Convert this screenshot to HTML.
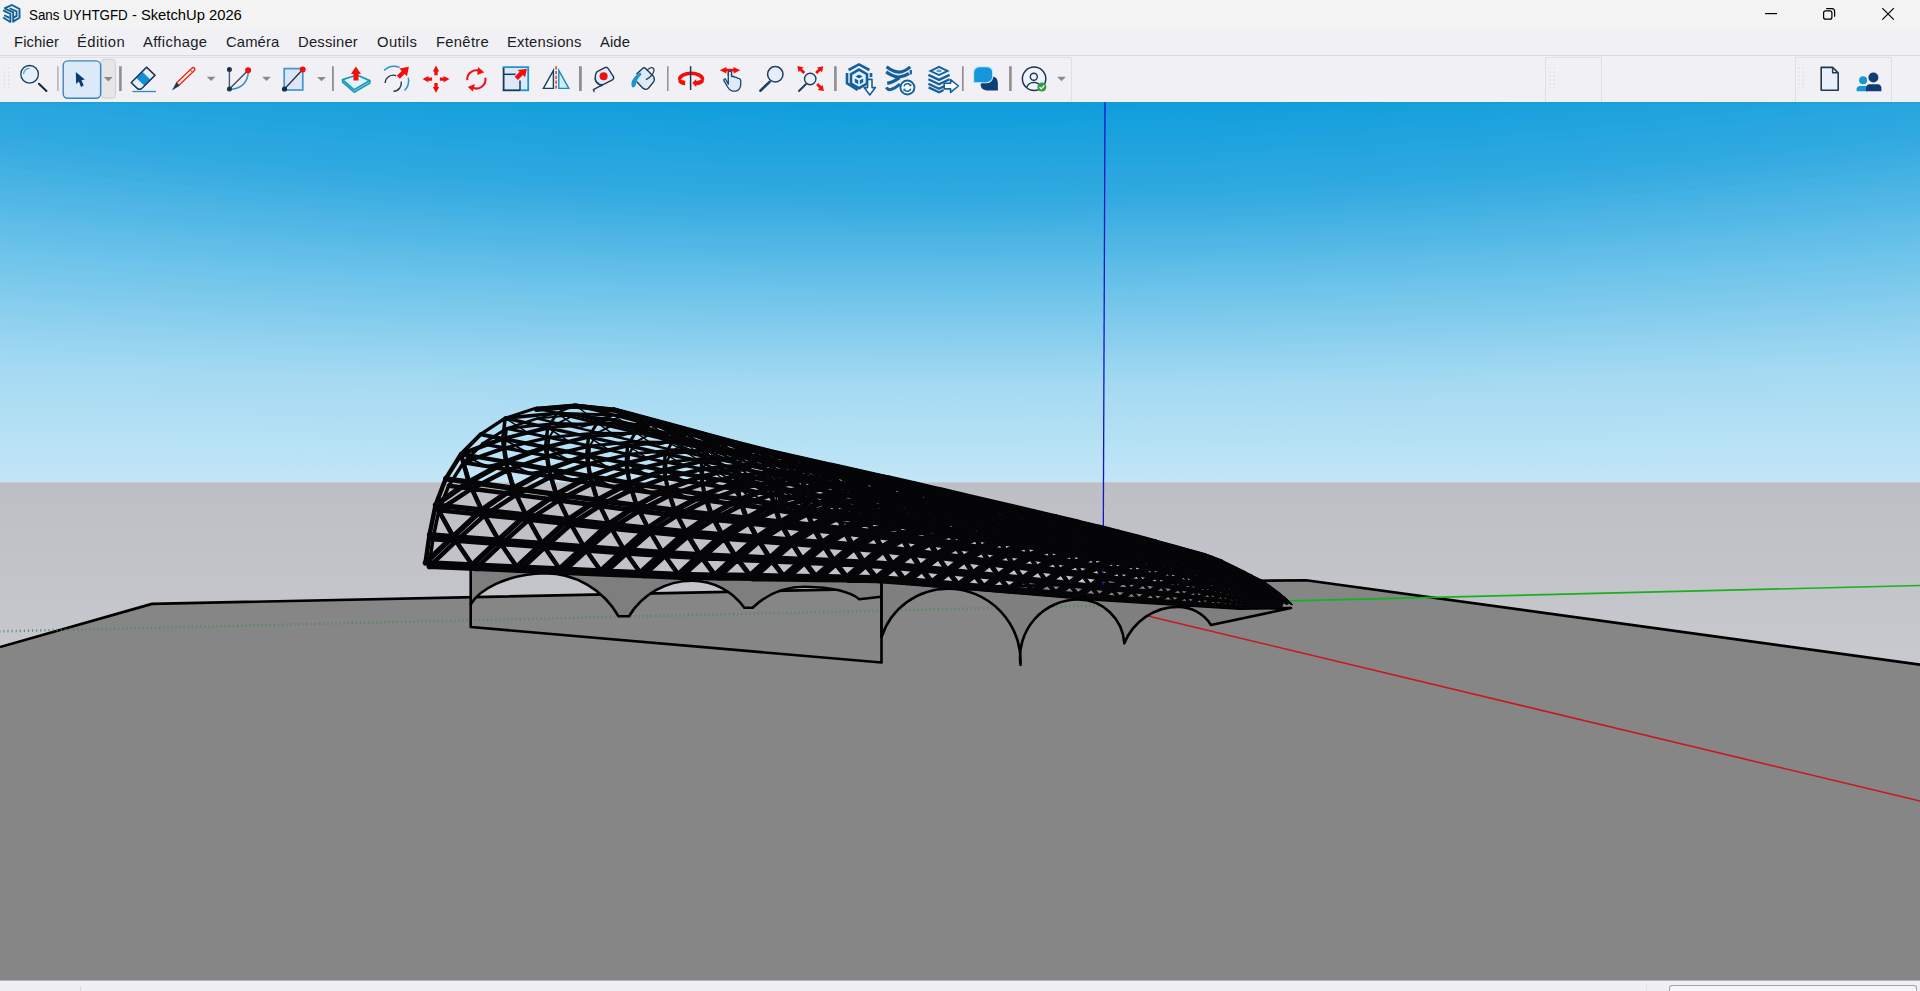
<!DOCTYPE html>
<html><head><meta charset="utf-8"><title>SketchUp</title>
<style>
html,body{margin:0;padding:0;width:1920px;height:991px;overflow:hidden;background:#f1f0f5;font-family:"Liberation Sans",sans-serif;}
#titlebar{position:absolute;left:0;top:0;width:1920px;height:28px;background:#f3f3f3;}
#title{position:absolute;left:29px;top:6px;font-size:14.8px;line-height:18px;color:#000;white-space:nowrap;}
#t1{position:absolute;left:0;top:0;display:inline-block;transform:scaleX(.903);transform-origin:0 50%;}
#t2{position:absolute;left:98.8px;top:0;white-space:pre;letter-spacing:-0.02px;}
#menubar{position:absolute;left:0;top:28px;width:1920px;height:27px;background:#f1f0f4;}
#menubar span{position:absolute;top:5px;font-size:14.8px;line-height:18px;color:#1b1b25;white-space:nowrap;}
#sep{position:absolute;left:0;top:55px;width:1920px;height:1px;background:#dadade;}
#toolbar{position:absolute;left:0;top:56px;width:1920px;height:46px;background:#f1f0f5;}
#view{position:absolute;left:0;top:102px;width:1920px;height:878.5px;}
#status{position:absolute;left:0;top:980px;width:1920px;height:11px;z-index:2;background:#f0f0f4;}
</style></head><body>
<div id="titlebar"><svg width="30" height="28" viewBox="0 0 30 28" style="position:absolute;left:0;top:0">
<g fill="none" stroke-linejoin="miter">
<g stroke="#d6f2fd" stroke-width="3.6" opacity=".9"><path d="M4.6,8.4L11.9,5L19.6,9V17.8L13.4,21.4"/><path d="M4.4,8.6L13.2,12.6V22.2"/><path d="M3.2,10.6L10.4,14.1V22.2L3.4,17.6"/></g>
<g stroke="#175e8e" stroke-width="1.8">
<path d="M4.4,8.4L11.9,5L19.5,9V17.8L13.4,21.4"/>
<path d="M4.6,8.4L13.2,12.4V22.4"/>
<path d="M9.6,8.2L16.6,11.4V15.9L13.6,17.6"/>
<path d="M3.1,10.4L10.4,14V22.4"/>
<path d="M4.2,15.2L9.6,17.9"/>
<path d="M3.1,17.4L10.4,21.9"/>
</g></g></svg><svg width="170" height="28" viewBox="1750 0 170 28" style="position:absolute;left:1750px;top:0">
<g fill="none" stroke="#000" stroke-width="1.2">
<path d="M1765.1,13.6H1777"/>
<rect x="1823.6" y="10.9" width="8.3" height="8.3" rx="2"/>
<path d="M1826.2,8.6H1832Q1834.5,8.8 1834.6,11.2V16.8"/>
<path d="M1882.3,8.2L1893.8,19.7M1893.8,8.2L1882.3,19.7"/>
</g></svg><div id="title"><span id="t1">Sans UYHTGFD</span><span id="t2"> - SketchUp 2026</span></div></div>
<div id="menubar">
<span style="left:14px;letter-spacing:0.09px">Fichier</span><span style="left:77px;letter-spacing:0.40px">Édition</span><span style="left:143px;letter-spacing:0.33px">Affichage</span><span style="left:226px;letter-spacing:0.11px">Caméra</span><span style="left:298px;letter-spacing:0.20px">Dessiner</span><span style="left:377px;letter-spacing:0.41px">Outils</span><span style="left:436px;letter-spacing:0.29px">Fenêtre</span><span style="left:507px;letter-spacing:0.23px">Extensions</span><span style="left:600px;letter-spacing:0.10px">Aide</span>
</div>
<div id="sep"></div>
<div id="toolbar"><svg width="1920" height="46" viewBox="0 56 1920 46" style="position:absolute;left:0;top:0">
<defs>
<path id="dd" d="M-4.4,-2.1h8.8l-4.4,4.4z" fill="#8b8b8d"/>
</defs>
<!-- toolbar frames -->
<g fill="none" stroke="#dfdfe5" stroke-width="1">
<path d="M0,57.5H1071.5V102"/>
<path d="M1545.5,102V57.5H1601.5V102"/>
<path d="M1795.5,102V57.5H1891.5V102"/>
</g>
<!-- grips -->
<g fill="#d6d6dc">
<g id="grip"><circle cx="4.5" cy="68.2" r=".7"/><circle cx="8.6" cy="68.2" r=".7"/><circle cx="4.5" cy="72.1" r=".7"/><circle cx="8.6" cy="72.1" r=".7"/><circle cx="4.5" cy="76" r=".7"/><circle cx="8.6" cy="76" r=".7"/><circle cx="4.5" cy="79.9" r=".7"/><circle cx="8.6" cy="79.9" r=".7"/><circle cx="4.5" cy="83.8" r=".7"/><circle cx="8.6" cy="83.8" r=".7"/><circle cx="4.5" cy="87.7" r=".7"/><circle cx="8.6" cy="87.7" r=".7"/></g>
<use href="#grip" x="1545.5"/><use href="#grip" x="1794.8"/>
</g>
<!-- separators -->
<g stroke="#8f8f92" fill="none">
<path d="M57.9,66.2V91" stroke-width="1.2" stroke="#a2a2a6"/>
<path d="M120.4,66.2V91" stroke-width="2.6"/>
<path d="M332.9,66.2V91" stroke-width="1.8"/>
<path d="M580.4,66.2V91" stroke-width="2.8"/>
<path d="M667.8,66.2V91" stroke-width="1.5"/>
<path d="M835.4,66.2V91" stroke-width="2.6"/>
<path d="M962.8,66.2V91" stroke-width="1.7"/>
<path d="M1010.4,66.2V91" stroke-width="2.6"/>
</g>
<!-- dropdown arrows -->
<use href="#dd" x="108.3" y="79.2"/><use href="#dd" x="211.1" y="78.8"/><use href="#dd" x="266.5" y="78.8"/><use href="#dd" x="321.5" y="79"/><use href="#dd" x="1061.5" y="78.9"/>
<!-- search -->
<g>
<circle cx="29.6" cy="74.3" r="8.8" fill="#e6f0fb" stroke="#1d3a57" stroke-width="1.3"/>
<path d="M23.6,73.6A6.3,6.3 0 0 1 29,68.4" fill="none" stroke="#4aa0d6" stroke-width="1.2" stroke-linecap="round"/>
<path d="M38.9,83.8L46.4,91" stroke="#15293d" stroke-width="2.1" stroke-linecap="round"/>
</g>
<!-- select button -->
<rect x="101.4" y="59.3" width="14" height="38.8" rx="3" fill="#e6e5e7" stroke="#cfced3" stroke-width="1"/>
<use href="#dd" x="108.3" y="79.2"/>
<rect x="63.2" y="60.9" width="37.4" height="37.4" rx="4.5" fill="#dce9f8" stroke="#3d84ba" stroke-width="1.4"/>
<path d="M75.8,71.9L76.1,83.9L78.9,81.5L81,86.9L83.7,85.6L81.5,80.3L84.8,79.6Z" fill="#0c3c6e"/>
<!-- eraser -->
<g>
<path d="M146.6,67.2L155,75.3L141.6,88.6Q139.5,90.3 137.4,88.4L131.2,82.6Z" fill="#e8f1fb" stroke="#1f3d5c" stroke-width="1.3" stroke-linejoin="round"/>
<path d="M142.2,71.6L150.5,79.7L144.4,85.8L136,77.8Z" fill="#1291d8"/>
<path d="M146.6,67.2L155,75.3L141.6,88.6Q139.5,90.3 137.4,88.4L131.2,82.6Z" fill="none" stroke="#1f3d5c" stroke-width="1.3" stroke-linejoin="round"/>
<path d="M132.4,91.5H156" stroke="#2b8cba" stroke-width="1.3"/>
</g>
<!-- pencil -->
<g>
<path d="M176.5,82.9L192.2,67.9Q193.4,67 194.4,68.1Q195.5,69.2 194.6,70.4L178.9,85.4Z" fill="#fde6c8" stroke="#dc141c" stroke-width="1.3" stroke-linejoin="round"/>
<path d="M190.2,69.8L192.8,72.4" stroke="#dc141c" stroke-width="1"/>
<path d="M172,90.6L176.2,82.4L179.6,85.8Z" fill="#173a5c"/>
</g>
<!-- arc -->
<g>
<path d="M229.4,69.6V89" stroke="#4c5b6e" stroke-width="1.4"/>
<path d="M229.4,89L248.1,70.2" stroke="#3c4c60" stroke-width="1.4"/>
<path d="M229.4,89.4Q247.6,88.6 248.4,71" fill="none" stroke="#3a93c6" stroke-width="1.6"/>
<circle cx="229.4" cy="69.6" r="2.5" fill="#173450"/>
<circle cx="229.4" cy="89" r="2.5" fill="#103a4c"/>
<circle cx="248.1" cy="70.2" r="3" fill="#f40d0d"/>
</g>
<!-- rectangle -->
<g>
<rect x="284.2" y="68.6" width="18.6" height="21.4" fill="#dfe4f6" stroke="#3b9bd0" stroke-width="1.7"/>
<path d="M284.5,89L302.7,69.6" stroke="#27394e" stroke-width="1.4"/>
<circle cx="284.5" cy="89" r="2.6" fill="#0f3047"/>
<circle cx="302.7" cy="69.6" r="3" fill="#f40d0d"/>
</g>
<!-- push/pull -->
<g>
<path d="M342.6,79.6L357,75L369.8,80.6L354.2,89.8Z" fill="#dff3fc" stroke="#1a9aba" stroke-width="1.7" stroke-linejoin="round"/>
<path d="M342.6,79.6V82L354.2,92.2L369.8,83V80.6" fill="none" stroke="#1a9aba" stroke-width="1.7" stroke-linejoin="round"/>
<path d="M355.9,66.6L361,73.9H358.5V80.6H353.4V73.9H350.9Z" fill="#f40d0d"/>
</g>
<!-- offset -->
<g fill="none">
<path d="M384.1,70.4A14.6,14.6 0 0 1 399.6,67.4" stroke="#2b95ca" stroke-width="1.5"/>
<path d="M408.3,77.6A14.6,14.6 0 0 1 404.6,90.6" stroke="#2b95ca" stroke-width="1.5"/>
<path d="M385.2,83A8.1,8.1 0 0 1 396.2,75.7" stroke="#1f3650" stroke-width="1.4"/>
<path d="M401.2,81.6A8.1,8.1 0 0 1 393.5,91.3" stroke="#1f3650" stroke-width="1.4"/>
<path d="M408.9,66.8L407,76.2L404.6,73.9L399.9,78.7L396.9,75.8L401.7,71L399.4,68.6Z" fill="#f40d0d"/>
</g>
<!-- move -->
<g fill="#f40d0d">
<path d="M436,65.6L439.2,71.4H437.7V75.2H434.3V71.4H432.8Z"/>
<path d="M436,92.7L439.2,86.9H437.7V83.1H434.3V86.9H432.8Z"/>
<path d="M422.5,79.1L428.3,75.9V77.4H432.1V80.8H428.3V82.3Z"/>
<path d="M449.5,79.1L443.7,75.9V77.4H439.9V80.8H443.7V82.3Z"/>
</g>
<!-- rotate -->
<g>
<path d="M467.2,80.2A9.1,9.1 0 0 1 480.6,71.4" fill="none" stroke="#ec0f18" stroke-width="2"/>
<path d="M478,66.9L484.2,72.3L477.2,75Z" fill="#f40d0d"/>
<path d="M485.3,77.6A9.1,9.1 0 0 1 472.6,87.7" fill="none" stroke="#ec0f18" stroke-width="2"/>
<path d="M474.8,83.9L467.8,87L472.9,91.4Z" fill="#f40d0d"/>
</g>
<!-- scale -->
<g>
<rect x="503.6" y="67.1" width="24.6" height="23.2" fill="#dbe9f9"/>
<path d="M503.6,90.3V67.1" stroke="#173a5e" stroke-width="1.8"/>
<path d="M502.7,90.3H520" stroke="#173a5e" stroke-width="1.8"/>
<path d="M520,90.3H529.1" stroke="#1a96d4" stroke-width="1.8"/>
<path d="M502.7,67.1H529.1M528.2,67.1V90.3" stroke="#1a96d4" stroke-width="1.8" fill="none"/>
<path d="M503.6,74.3H515.6" stroke="#173a5e" stroke-width="1.5"/>
<path d="M520,80.4V90.3" stroke="#173a5e" stroke-width="1.5"/>
<path d="M526.9,68.8L525.1,77.2L522.9,75L517.9,80L514.6,76.7L519.6,71.7L517.6,69.9Z" fill="#f40d0d"/>
</g>
<!-- flip -->
<g>
<path d="M543.4,88.4L553.4,70.4V88.4Z" fill="#f4fafd" stroke="#174060" stroke-width="1.4" stroke-linejoin="miter"/>
<path d="M558.8,70.4L568.8,88.4H558.8Z" fill="#cdeefa" stroke="#1a8fb0" stroke-width="1.4"/>
<path d="M556.1,66.2V90" stroke="#d9595c" stroke-width="1.8" stroke-dasharray="3.2 1.6"/>
</g>
<!-- tape measure -->
<g>
<path d="M597.2,71.6L604.9,67.6Q606.9,66.7 608.2,68.6L613.4,76.6Q614.4,78.6 612.4,79.8L601.6,85.3Q597.6,84.6 595.6,80.6Q594.6,74.2 597.2,71.6Z" fill="#e0eefb" stroke="#1d3a58" stroke-width="1.4" stroke-linejoin="round"/>
<path d="M594.9,77.8Q595.2,82.2 599.2,83.6" fill="none" stroke="#1d3a58" stroke-width="1.2"/>
<circle cx="603.6" cy="76.3" r="4" fill="#f40d0d"/>
<path d="M601.8,85.2L593.4,89.6L594.1,91.6" fill="none" stroke="#1d3a58" stroke-width="1.4" stroke-linecap="round" stroke-linejoin="round"/>
<rect x="600" y="84" width="2.2" height="2.4" fill="#1d3a58" transform="rotate(-27 601 85)"/>
</g>
<!-- paint bucket -->
<g>
<path d="M636.4,74.2L642.6,68.4Q644.2,67.2 645.6,68.6L653.6,76.6Q655.2,79.2 653.8,81.6L648.4,88.2Q645.8,90.4 643.2,88.4L636.6,81.4" fill="#dfeaf8" stroke="#1d3a58" stroke-width="1.4" stroke-linejoin="round"/>
<path d="M640.4,72.4Q635.2,74.6 632.2,80.6Q630.4,85.6 632.6,87.6Q635.2,87.8 636.2,83.6Q636.8,79 641.6,74.6Z" fill="#1a95d0"/>
<path d="M647.2,70.2Q650.6,66.6 653.4,68.2Q655,70.6 652.2,74.6Q650,77.6 646.4,79.4" fill="none" stroke="#1d3a58" stroke-width="1.2" stroke-linecap="round"/>
</g>
<!-- orbit -->
<g>
<path d="M679.6,79.4A11.5,6.1 0 0 1 702.6,79.4" fill="none" stroke="#f40d0d" stroke-width="3.6"/>
<path d="M678.3,77.4Q680.6,80.2 685.2,80.7V85.3Q680.2,84.6 678.5,82.2Z" fill="#f40d0d"/>
<path d="M703.9,77.4Q701,80.4 696.2,80.9V79L692.3,82.9L696.2,86.9V85.3Q701.6,84.6 703.7,82.2Z" fill="#f40d0d"/>
<path d="M690.6,66.2V90" stroke="#173a5c" stroke-width="1.5"/>
</g>
<!-- pan -->
<g>
<path d="M728.3,84.2V72.4Q728.3,71.2 729.9,71.2Q731.5,71.2 731.5,72.4V76.6Q733.4,75.6 734.6,77.4Q736.4,76.6 737.6,78.4Q739.8,78 740.7,80V84.6Q740.4,90 735.6,91.2H732.4Q729.4,90.4 727.6,87L723.8,80.4Q723.6,78.6 725.4,78.8Z" fill="#deeaf8" stroke="#1f4668" stroke-width="1.3" stroke-linejoin="round"/>
<path d="M719.8,70.2L726.4,66.9V68.8H733.6V66.9L740.2,70.2L733.6,73.5V71.6H726.4V73.5Z" fill="#f40d0d"/>
<path d="M728.3,76V72.4Q728.3,71.2 729.9,71.2Q731.5,71.2 731.5,72.4V76.6" fill="#deeaf8" stroke="#1f4668" stroke-width="1.3"/>
</g>
<!-- zoom -->
<g>
<circle cx="775.3" cy="74.3" r="7.7" fill="#e6eefb" stroke="#1c3f62" stroke-width="1.5"/>
<path d="M769.6,81.9L760.4,90.7" stroke="#1c3f62" stroke-width="2.6" stroke-linecap="round"/>
</g>
<!-- zoom extents -->
<g>
<circle cx="810.2" cy="79" r="5.7" fill="#eaf0fb" stroke="#1c3f62" stroke-width="1.4"/>
<path d="M805.8,84.2L799,91" stroke="#1c3f62" stroke-width="2" stroke-linecap="round"/>
<g fill="#f40d0d">
<path d="M797.4,66L803.6,67.2L802,68.8L805.2,72L803.2,74L800,70.8L798.6,72.2Z"/>
<path d="M823.2,66.2L822,72.4L820.4,70.8L817.2,74L815.2,72L818.4,68.8L817,67.4Z"/>
<path d="M823.9,91.1L817.7,89.9L819.3,88.3L816.1,85.1L818.1,83.1L821.3,86.3L822.7,84.9Z"/>
</g>
</g>
<!-- 3D warehouse -->
<g fill="none" stroke="#15609c" stroke-width="2.6" stroke-linejoin="miter">
<path d="M848.6,70L859,64.4L869.4,70"/>
<path d="M847,73V83.4L857.6,90"/>
<path d="M871,73V77"/>
<path d="M859,69.6L867,74.2V83.6L859,88.2L851,83.6V74.2Z" fill="#e3f3fc"/>
<path d="M859,74.6L862.6,76.6L859,78.6L855.4,76.6Z" fill="#15609c" stroke="none"/>
<path d="M854.8,78.4L858.2,80.2V84.2L854.8,82.2Z" fill="#15609c" stroke="none"/>
<path d="M863.2,78.4L859.8,80.2V84.2L863.2,82.2Z" fill="#15609c" stroke="none"/>
<path d="M867.6,79.4H872V87.6H875.4L869.8,95L864.2,87.6H867.6Z" fill="#fff" stroke-width="1.6" stroke-linejoin="round"/>
</g>
<!-- extension warehouse -->
<g fill="none" stroke="#15609c">
<path d="M886.6,66.8Q892.4,71.6 898.8,72.2Q905,71.8 910.2,66.9" stroke-width="3.2"/>
<path d="M886.2,71.9Q892.4,76.6 898.9,77.1Q904.6,76.6 909,73.4" stroke-width="3.2"/>
<path d="M910.8,70V74.4" stroke-width="2.2"/>
<path d="M887.2,83.4Q893,82.4 899.4,77.6" stroke-width="3.2"/>
<path d="M886.4,87.4Q887.6,90 890.4,89.6Q895,88.6 900,84" stroke-width="3"/>
<circle cx="907.4" cy="87.5" r="7" fill="#fff" stroke-width="1.9"/>
<path d="M904,86.2A3.7,3.7 0 0 1 910.2,84.8" stroke-width="1.5"/>
<path d="M910.8,88.8A3.7,3.7 0 0 1 904.6,90.2" stroke-width="1.5"/>
<path d="M911.4,83.4V86.2H908.6Z" fill="#15609c" stroke="none"/>
<path d="M903.4,91.6V88.8H906.2Z" fill="#15609c" stroke="none"/>
</g>
<!-- send to layout -->
<g>
<path d="M939,65.8L949.8,70.9L939,76L928.2,70.9Z" fill="#15609c"/>
<path d="M939,67.9L945.4,70.9L939,73.9L932.6,70.9Z" fill="#e8f5fd"/>
<path d="M939,69.5L942,70.9L939,72.3L936,70.9Z" fill="#15609c"/>
<path d="M939,70.3L940.3,70.9L939,71.5L937.7,70.9Z" fill="#e8f5fd"/>
<g fill="none" stroke="#15609c" stroke-width="2.3">
<path d="M928.4,74.9L939,79.9L949.6,74.9"/>
<path d="M928.4,79.3L939,84.3L949.6,79.3"/>
<path d="M928.4,83.7L939,88.7L945,85.9"/>
<path d="M928.6,87.4L939,92.2L943.6,90"/>
</g>
<path d="M944.2,83.2H950.6V79.6L958.4,86L950.6,92.4V88.9H944.2Z" fill="#fff" stroke="#15609c" stroke-width="1.6" stroke-linejoin="round"/>
</g>
<!-- chat -->
<g>
<path d="M986,76.4H992Q997.9,76.8 997.9,83V90.5H986.6Q980.8,90 980.6,84.6Z" fill="#0f3f75"/>
<path d="M979.4,66.6H987.2Q992.7,67 992.7,72.6V76.6Q992.4,82.3 986.8,82.7H973.6V72.4Q974,67 979.4,66.6Z" fill="#1497dc" stroke="#c9ecfb" stroke-width="1.1"/>
</g>
<!-- user -->
<g>
<circle cx="1034.1" cy="78.7" r="11.7" fill="#eef3fc" stroke="#1c3350" stroke-width="1.5"/>
<circle cx="1033.8" cy="76.7" r="3.5" fill="#eef3fc" stroke="#1c3350" stroke-width="1.4"/>
<path d="M1026.6,87.6Q1028.4,82.6 1033.8,82.4Q1038.4,82.6 1040.4,86" fill="none" stroke="#1c3350" stroke-width="1.4"/>
<circle cx="1041.9" cy="87.1" r="4.5" fill="#2f9e44"/>
<path d="M1039.6,87.2L1041.3,88.9L1044.3,85.5" fill="none" stroke="#fff" stroke-width="1.3"/>
</g>
<!-- doc -->
<g>
<path d="M1821.2,67.4H1832.6L1838.2,72.8V90.3H1821.2Z" fill="#eaf0fb" stroke="#24384f" stroke-width="1.6" stroke-linejoin="round"/>
<path d="M1832.6,67.4V72.8H1838.2" fill="none" stroke="#24384f" stroke-width="1.4" stroke-linejoin="round"/>
</g>
<!-- people -->
<g>
<circle cx="1863.1" cy="80.3" r="4" fill="#1596d6"/>
<path d="M1856.6,91.2V88.6Q1857,86 1859.6,86H1867V91.2Z" fill="#1596d6"/>
<circle cx="1873.4" cy="77.5" r="5" fill="#0f3e73"/>
<path d="M1866,91.2V87.6Q1866.4,84.4 1869.6,84.3H1877.8Q1881,84.4 1881.4,87.6V91.2Z" fill="#0f3e73"/>
</g>

</svg>
</div>
<svg id="view" viewBox="0 102 1920 878">
<defs><linearGradient id="gnd" x1="0" y1="0" x2="0" y2="1"><stop offset="0" stop-color="#bebec5"/><stop offset="1" stop-color="#c9c9d0"/></linearGradient></defs>
<rect x="0" y="102" width="1920" height="380" fill="#c2e6f7"/>
<path d="M0,475.9Q960,478.1 1920,475.9V100H0Z" fill="#c0e5f7"/>
<path d="M0,469.9Q960,474.1 1920,469.9V100H0Z" fill="#bee4f6"/>
<path d="M0,463.8Q960,470.2 1920,463.8V100H0Z" fill="#bde4f6"/>
<path d="M0,457.7Q960,466.3 1920,457.7V100H0Z" fill="#bbe3f6"/>
<path d="M0,451.6Q960,462.4 1920,451.6V100H0Z" fill="#bae3f6"/>
<path d="M0,445.6Q960,458.4 1920,445.6V100H0Z" fill="#b8e2f5"/>
<path d="M0,439.5Q960,454.5 1920,439.5V100H0Z" fill="#b7e1f5"/>
<path d="M0,433.4Q960,450.6 1920,433.4V100H0Z" fill="#b5e1f5"/>
<path d="M0,427.3Q960,446.7 1920,427.3V100H0Z" fill="#b4e0f4"/>
<path d="M0,421.3Q960,442.7 1920,421.3V100H0Z" fill="#b2dff4"/>
<path d="M0,415.2Q960,438.8 1920,415.2V100H0Z" fill="#b0dff4"/>
<path d="M0,409.1Q960,434.9 1920,409.1V100H0Z" fill="#afdef4"/>
<path d="M0,403.0Q960,431.0 1920,403.0V100H0Z" fill="#adddf3"/>
<path d="M0,397.0Q960,427.0 1920,397.0V100H0Z" fill="#acddf3"/>
<path d="M0,390.9Q960,423.1 1920,390.9V100H0Z" fill="#aadcf3"/>
<path d="M0,384.8Q960,419.2 1920,384.8V100H0Z" fill="#a9dcf3"/>
<path d="M0,378.7Q960,415.3 1920,378.7V100H0Z" fill="#a7dbf2"/>
<path d="M0,372.7Q960,411.3 1920,372.7V100H0Z" fill="#a6daf2"/>
<path d="M0,366.6Q960,407.4 1920,366.6V100H0Z" fill="#a4d9f2"/>
<path d="M0,360.5Q960,403.5 1920,360.5V100H0Z" fill="#a1d8f1"/>
<path d="M0,354.5Q960,399.5 1920,354.5V100H0Z" fill="#9ed7f1"/>
<path d="M0,348.4Q960,395.6 1920,348.4V100H0Z" fill="#9bd6f1"/>
<path d="M0,342.3Q960,391.7 1920,342.3V100H0Z" fill="#98d5f0"/>
<path d="M0,336.2Q960,387.8 1920,336.2V100H0Z" fill="#95d3f0"/>
<path d="M0,330.2Q960,383.8 1920,330.2V100H0Z" fill="#92d2ef"/>
<path d="M0,324.1Q960,379.9 1920,324.1V100H0Z" fill="#8fd1ef"/>
<path d="M0,318.0Q960,376.0 1920,318.0V100H0Z" fill="#8cd0ee"/>
<path d="M0,311.9Q960,372.1 1920,311.9V100H0Z" fill="#89ceee"/>
<path d="M0,305.9Q960,368.1 1920,305.9V100H0Z" fill="#86cdee"/>
<path d="M0,299.8Q960,364.2 1920,299.8V100H0Z" fill="#83cced"/>
<path d="M0,293.7Q960,360.3 1920,293.7V100H0Z" fill="#80cbed"/>
<path d="M0,287.6Q960,356.4 1920,287.6V100H0Z" fill="#7dcaec"/>
<path d="M0,281.6Q960,352.4 1920,281.6V100H0Z" fill="#7ac8ec"/>
<path d="M0,275.5Q960,348.5 1920,275.5V100H0Z" fill="#77c7eb"/>
<path d="M0,269.4Q960,344.6 1920,269.4V100H0Z" fill="#74c6eb"/>
<path d="M0,263.3Q960,340.7 1920,263.3V100H0Z" fill="#71c5eb"/>
<path d="M0,257.3Q960,336.7 1920,257.3V100H0Z" fill="#6ec4ea"/>
<path d="M0,251.2Q960,332.8 1920,251.2V100H0Z" fill="#6bc2ea"/>
<path d="M0,245.1Q960,328.9 1920,245.1V100H0Z" fill="#68c1e9"/>
<path d="M0,239.0Q960,325.0 1920,239.0V100H0Z" fill="#65c0e9"/>
<path d="M0,233.0Q960,321.0 1920,233.0V100H0Z" fill="#62bee8"/>
<path d="M0,226.9Q960,317.1 1920,226.9V100H0Z" fill="#5fbde8"/>
<path d="M0,220.8Q960,313.2 1920,220.8V100H0Z" fill="#5cbbe7"/>
<path d="M0,214.8Q960,309.2 1920,214.8V100H0Z" fill="#58bae7"/>
<path d="M0,208.7Q960,305.3 1920,208.7V100H0Z" fill="#55b9e6"/>
<path d="M0,202.6Q960,301.4 1920,202.6V100H0Z" fill="#52b7e6"/>
<path d="M0,196.5Q960,297.5 1920,196.5V100H0Z" fill="#4fb6e5"/>
<path d="M0,190.5Q960,293.5 1920,190.5V100H0Z" fill="#4cb5e4"/>
<path d="M0,184.4Q960,289.6 1920,184.4V100H0Z" fill="#49b3e4"/>
<path d="M0,178.3Q960,285.7 1920,178.3V100H0Z" fill="#46b2e3"/>
<path d="M0,172.2Q960,281.8 1920,172.2V100H0Z" fill="#42b1e3"/>
<path d="M0,166.2Q960,277.8 1920,166.2V100H0Z" fill="#3fafe2"/>
<path d="M0,160.1Q960,273.9 1920,160.1V100H0Z" fill="#3caee2"/>
<path d="M0,154.0Q960,270.0 1920,154.0V100H0Z" fill="#39ace1"/>
<path d="M0,147.9Q960,266.1 1920,147.9V100H0Z" fill="#36abe1"/>
<path d="M0,141.9Q960,262.1 1920,141.9V100H0Z" fill="#33aae0"/>
<path d="M0,135.8Q960,258.2 1920,135.8V100H0Z" fill="#30a9e0"/>
<path d="M0,129.7Q960,254.3 1920,129.7V100H0Z" fill="#2ea8e0"/>
<path d="M0,123.6Q960,250.4 1920,123.6V100H0Z" fill="#2ca8df"/>
<path d="M0,117.6Q960,246.4 1920,117.6V100H0Z" fill="#2ba7df"/>
<path d="M0,111.5Q960,242.5 1920,111.5V100H0Z" fill="#29a6df"/>
<path d="M0,105.4Q960,238.6 1920,105.4V100H0Z" fill="#27a6df"/>
<path d="M0,99.4Q960,234.6 1920,99.4V100H0Z" fill="#25a5df"/>
<path d="M0,93.3Q960,230.7 1920,93.3V100H0Z" fill="#23a5de"/>
<path d="M0,87.2Q960,226.8 1920,87.2V100H0Z" fill="#21a4de"/>
<path d="M0,81.1Q960,222.9 1920,81.1V100H0Z" fill="#20a4de"/>
<path d="M0,75.1Q960,218.9 1920,75.1V100H0Z" fill="#1ea3de"/>
<path d="M0,69.0Q960,215.0 1920,69.0V100H0Z" fill="#1ca2de"/>
<path d="M0,62.9Q960,211.1 1920,62.9V100H0Z" fill="#1aa2dd"/>
<path d="M0,56.8Q960,207.2 1920,56.8V100H0Z" fill="#18a1dd"/>
<path d="M0,50.8Q960,203.2 1920,50.8V100H0Z" fill="#16a1dd"/>
<path d="M0,44.7Q960,199.3 1920,44.7V100H0Z" fill="#14a0dd"/>
<path d="M0,38.6Q960,195.4 1920,38.6V100H0Z" fill="#139fdd"/>
<path d="M0,32.5Q960,191.5 1920,32.5V100H0Z" fill="#119fdc"/>
<path d="M0,26.5Q960,187.5 1920,26.5V100H0Z" fill="#0f9edc"/>
<rect x="0" y="102" width="1920" height="1" fill="#2a93bd" opacity=".55"/>
<rect x="0" y="482" width="1920" height="200" fill="url(#gnd)"/>
<polygon points="0,646.8 152,603.6 1258,580.6 1306,580 1920,664.3 1920,982 0,982" fill="#868686"/>
<polyline points="0,646.8 152,603.6 1258,580.6 1306,580 1920,664.3" fill="none" stroke="#000" stroke-width="2.7" stroke-linejoin="round"/>
<line x1="1105" y1="102" x2="1103" y2="605" stroke="#1414c8" stroke-width="1.3"/>
<line x1="1103" y1="605.2" x2="1920" y2="585.2" stroke="#19b01e" stroke-width="1.6"/>
<line x1="1103" y1="605" x2="1920" y2="800.8" stroke="#c81822" stroke-width="1.6"/>
<line x1="1103" y1="605.2" x2="0" y2="631.1" stroke="#4f8a58" stroke-opacity=".8" stroke-width="2.6" stroke-dasharray="1.2 2.9"/>
<g fill="#7e7e7e" stroke="none">
<path d="M470.7,567.9 L470.7,604 C479,590 505,574 545,573 L545,571.3 Z"/>
<path d="M545,573 A84.3,84.3 0 0 1 618.5,616.0 L629,616 A73.7,73.7 0 0 1 692.0,580.5 L692,577.7 L545,571.3 Z"/>
<path d="M692,580.5 A64.2,64.2 0 0 1 744.3,607.5 L752.6,607.5 A75.9,75.9 0 0 1 805.0,586.5 L805,579.8 L692,577.7 Z"/>
<path d="M805,586.5 C830,587 850,591 859.3,599 L881,596.5 L881,581.2 L805,579.8 Z"/>
</g>
<g stroke="#000" stroke-width="2.6" stroke-linejoin="round" stroke-linecap="round" fill="none">
<path d="M470.7,604 C479,590 505,574 545,573 A84.3,84.3 0 0 1 618.5,616.0 L629,616 A73.7,73.7 0 0 1 692.0,580.5 A64.2,64.2 0 0 1 744.3,607.5 L752.6,607.5 A75.9,75.9 0 0 1 805.0,586.5 C830,587 850,591 859.3,599 L881,596.5"/>
<path d="M470.7,562 L470.7,626.7 L881.5,662.3 L881.5,578"/>
<path d="M881.6,581.3 L881.6,636.7 A69.8,69.8 0 0 1 948.0,588.5 A72.6,72.6 0 0 1 1020.5,664.7 A58.0,58.0 0 0 1 1078.0,599.3 A46.4,46.4 0 0 1 1124.3,643.1 A57.8,57.8 0 0 1 1178.0,606.6 A39.1,39.1 0 0 1 1211.0,624.7 L1291,607.8 L1240,608.5 L1100,599.8 Z" fill="#7f7f7f"/>
</g>
<g fill="none" stroke="#050508" stroke-linecap="round"><path d="M1245.3,591.9l4.7,2.3M1245.3,591.9l-4.3,-0.3M1253.8,594.3l4.1,1.9M1253.8,594.3l-3.7,-0.2M1261.1,596.4l3.5,1.7M1261.1,596.4l-3.2,-0.2M1267.3,598.2l2.9,1.4M1267.3,598.2l-2.8,-0.2M1272.6,599.8l2.5,1.2M1272.6,599.8l-2.4,-0.2M1277.1,601.2l2.1,0.9M1277.1,601.2l-2,-0.2M1280.8,602.3l1.7,0.8M1280.8,602.3l-1.7,-0.2M1271.6,598.4l-0.8,-2.1M1276.2,600l-0.7,-1.7M1280,601.3l-0.7,-1.4M1283.2,602.5l-0.6,-1.1M1222.5,579.3l6.1,3.9M1222.5,579.3l-5.7,0M1233.6,583.7l5.4,3.5M1233.6,583.7l-5,-0.4M1243.5,587.5l4.8,3M1243.5,587.5l-4.4,-0.4M1252.1,590.7l4.1,2.4M1252.1,590.7l-3.9,-0.2M1259.6,593.3l3.5,2.1M1259.6,593.3l-3.4,-0.2M1266,595.7l3,1.8M1266,595.7l-2.9,-0.3M1271.4,597.7l2.5,1.5M1271.4,597.7l-2.5,-0.3M1276,599.5l2.1,1.2M1276,599.5l-2.1,-0.3M1279.9,600.9l1.8,1M1279.9,600.9l-1.7,-0.2M1283.1,602.1l-1.5,-0.2M1251.4,588.4l0.2,-3.2M1258.8,591.4l0.1,-2.6M1265.3,594l0,-2.3M1270.8,596.3l-0.1,-1.9M1275.4,598.3l-0.2,-1.6M1279.3,599.9l-0.2,-1.3M1282.5,600.9l-0.2,-1.1M1282.6,601.3l-0.2,-1.1M1195.2,564.5l7.3,5M1195.2,564.5l-6.9,0.1M1208.9,569.5l6.7,4.6M1208.9,569.5l-6.3,0.1M1221.5,574.1l6.2,4.1M1221.5,574.1l-5.8,0M1232.7,578.6l5.3,4M1232.7,578.6l-5.1,-0.4M1242.5,583.1l4.7,3.5M1242.5,583.1l-4.5,-0.5M1251.2,587.1l4,2.9M1251.2,587.1l-4,-0.4M1258.7,590.3l3.5,2.4M1258.7,590.3l-3.4,-0.3M1265.2,593.1l3,2.1M1265.2,593.1l-3,-0.3M1270.6,595.5l2.5,1.8M1270.6,595.5l-2.5,-0.3M1275.3,597.7l2.1,1.5M1275.3,597.7l-2.1,-0.3M1279.2,599.5l1.8,1.2M1279.2,599.5l-1.8,-0.3M1282.5,600.9l1.5,1M1282.5,600.9l-1.5,-0.3M1275.2,596.7l3.9,1.9M1279.1,598.6l3.2,1.6M1282.3,600.2l2.7,1.4M1233.6,576.3l2.2,-2.9M1243.1,581l2.2,-3M1251.6,585.2l1.7,-2.6M1259,588.8l1.5,-2.1M1265.2,590.7l1.2,-1.9M1265.3,591.7l1.1,-1.8M1270.6,593.5l0.9,-1.7M1270.7,594.4l0.9,-1.6M1275.2,596.7l4.3,0.8M1275.2,596l0.7,-1.4M1275.2,596.7l0.6,-1.4M1279.1,598.6l3.5,0.7M1279.1,598.1l0.5,-1.2M1279.1,598.6l0.4,-1.1M1282.3,600.2l2.8,0.6M1282.3,599.8l0.3,-1M1282.3,600.2l0.3,-1M1285,601.3l0.2,-0.8M1285,601.6l0.1,-0.8M1147,545.1l9.1,5.7M1147,545.1l-8.9,1.3M1164.6,549.6l8.7,5.4M1164.6,549.6l-8.5,1.2M1181.5,553.8l8,5.4M1181.5,553.8l-8.1,1.1M1196.5,559.1l7,5.5M1196.5,559.1l-7,0.1M1209.9,564.6l6.4,5M1209.9,564.6l-6.4,0M1222.2,569.6l5.9,4.5M1222.2,569.6l-5.9,-0.1M1233.4,574.2l5.1,4.4M1233.4,574.2l-5.4,-0.1M1243,579.2l4.5,3.9M1243,579.2l-4.5,-0.6M1251.5,583.7l3.9,3.4M1251.5,583.7l-4,-0.6M1258.9,587.5l3.3,2.8M1258.9,587.5l-3.4,-0.4M1265.2,590.7l2.9,2.4M1265.2,590.7l-3,-0.3M1270.6,593.5l2.4,2.1M1270.6,593.5l-2.5,-0.4M1275.2,596l2.1,1.7M1275.2,596l-2.1,-0.4M1279.1,598.1l1.7,1.4M1279.1,598.1l-1.8,-0.4M1282.3,599.8l1.4,1.2M1282.3,599.8l-1.5,-0.3M1285,601.3l-1.3,-0.3M1275.9,595.3l3.7,2.2M1279.5,597.5l3.1,1.8M1282.6,599.3l2.6,1.5M1235.8,573.4l3.1,-1.3M1245.3,578l3.1,-1.6M1253.3,582.6l2.5,-1.5M1260.4,586.6l2.1,-1.3M1266.4,588.8l1.9,-1.2M1266.4,589.9l1.8,-1.1M1271.5,591.8l1.5,-1.1M1271.5,592.8l1.4,-1M1275.9,595.3l4.5,1.4M1275.9,594.5l1.2,-1M1275.9,595.3l1.1,-0.9M1279.5,597.5l3.7,1.2M1279.5,596.9l0.9,-0.8M1279.5,597.5l0.8,-0.8M1282.6,599.3l3,1M1282.6,598.8l0.6,-0.7M1282.6,599.3l0.6,-0.6M1285.2,600.4l2.4,0.8M1285.2,600.8l2.4,0.8M1285.2,600.4l0.5,-0.6M1285.2,600.8l0.4,-0.5M1168.4,546.3l8.3,5.4M1168.4,546.3l-8.6,1.1M1184.9,550.7l7.9,5.1M1184.9,550.7l-8.2,1M1200.3,555.3l6.6,5.7M1200.3,555.3l-7.4,0.6M1213.1,561.1l6,5.2M1213.1,561.1l-6.3,-0.1M1225,566.4l5.5,4.7M1225,566.4l-5.8,-0.1M1235.8,571.3l5.1,4.3M1235.8,571.3l-5.3,-0.2M1245.3,576.2l4.1,4.2M1245.3,576.2l-4.4,-0.6M1253.3,581l3.7,3.7M1253.3,581l-3.9,-0.6M1260.4,585.3l3.1,3M1260.4,585.3l-3.4,-0.6M1266.4,588.8l2.7,2.6M1266.4,588.8l-2.9,-0.5M1271.5,591.8l2.2,2.3M1271.5,591.8l-2.5,-0.5M1275.9,594.5l1.9,1.9M1275.9,594.5l-2.1,-0.5M1279.5,596.9l1.6,1.6M1279.5,596.9l-1.8,-0.4M1282.6,598.8l1.3,1.3M1282.6,598.8l-1.5,-0.4M1285.2,600.4l1.1,1.1M1285.2,600.4l-1.2,-0.3M1277,594.4l3.4,2.3M1280.4,596.7l2.8,1.9M1283.2,598.6l2.4,1.6M1285.6,599.8l2,1.5M1285.6,600.3l2,1.4M1238.9,572l3.1,0.8M1248.3,576.4l2.6,0.7M1255.9,581.1l2.7,0.2M1262.5,585.3l2.3,0.1M1268.2,588.9l2,0.2M1273.1,590.7l1.6,0M1273,591.8l1.6,0.1M1277,594.4l4.4,2.2M1277,593.6l1.4,-0.1M1277,594.4l1.3,-0M1280.4,596.7l3.6,1.8M1280.4,596l1.1,-0.1M1280.4,596.7l1,-0.1M1283.2,598.6l2.9,1.5M1283.2,598.1l0.8,-0.2M1283.2,598.6l0.8,-0.1M1285.6,599.8l2.4,1.3M1285.6,600.3l2.4,1.2M1285.6,599.8l0.6,-0.2M1285.6,600.3l0.6,-0.1M1287.6,601.3l0.4,-0.2M1287.6,601.6l0.4,-0.1M1173.1,545.3l7.9,5.7M1173.1,545.3l-8.6,1.3M1189.2,549.8l7.5,5.4M1189.2,549.8l-8.2,1.2M1204.5,554l6.7,5.4M1204.5,554l-7.8,1.1M1217.5,559.3l5.5,5.5M1217.5,559.3l-6.2,0.1M1228.7,564.8l5.1,5M1228.7,564.8l-5.7,0M1239,569.8l4.7,4.5M1239,569.8l-5.2,-0M1248.5,574.4l3.7,4.4M1248.5,574.4l-4.8,-0.1M1256,579.3l3.3,3.9M1256,579.3l-3.8,-0.6M1262.7,583.8l2.9,3.4M1262.7,583.8l-3.3,-0.5M1268.3,587.6l2.4,2.8M1268.3,587.6l-2.7,-0.4M1273.1,590.7l2,2.4M1273.1,590.7l-2.4,-0.3M1277,593.6l1.7,2.1M1277,593.6l-2,-0.4M1280.4,596l1.4,1.7M1280.4,596l-1.7,-0.4M1283.2,598.1l1.2,1.4M1283.2,598.1l-1.4,-0.4M1285.6,599.8l1,1.2M1285.6,599.8l-1.2,-0.3M1287.6,601.3l-1,-0.3M1264.8,585.4l5.4,3.6M1270.2,589l4.3,2.9M1274.7,590.8l3.7,2.7M1274.6,591.9l3.8,2.5M1278.4,593.5l3,2.4M1278.3,594.4l3.1,2.2M1281.5,595.9l2.6,2.1M1281.4,596.6l2.6,1.9M1284.1,597.9l2.2,1.7M1284,598.5l2.2,1.6M1286.2,599.7l1.8,1.5M1286.2,600.2l1.8,1.3M1221.4,563.3l3,2.6M1232.1,568.3l3.4,1.9M1241.9,572.9l3,1.6M1251,577.1l2.6,1.4M1258.9,579.4l2.9,0.8M1258.6,581.3l2.8,0.9M1264.8,585.4l7.4,4.2M1265,583.8l2.4,0.6M1264.8,585.4l2.4,0.7M1270.2,589l6.1,3.4M1270.4,587.7l2,0.5M1270.2,589l2,0.5M1274.7,590.8l5.3,3M1274.6,591.9l5.2,2.9M1274.7,590.8l1.9,0.5M1274.6,591.9l1.8,0.5M1278.4,593.5l4.3,2.6M1278.3,594.4l4.3,2.5M1278.4,593.5l1.5,0.3M1278.3,594.4l1.5,0.4M1281.5,595.9l3.5,2.2M1281.4,596.6l3.5,2.1M1281.5,595.9l1.2,0.2M1281.4,596.6l1.2,0.2M1284.1,597.9l2.9,1.8M1284,598.5l2.9,1.7M1284.1,597.9l0.9,0.1M1284,598.5l0.9,0.2M1286.2,599.7l2.3,1.5M1286.2,600.2l2.3,1.4M1286.2,599.7l0.7,0M1286.2,600.2l0.7,0.1M1288,601.1l1.9,1.2M1288,601.5l1.9,1.1M1288,601.1l0.5,0M1288,601.5l0.5,0M649.8,422.2l16.4,14.7M684.9,431.5l15.8,14M684.9,431.5l-18.7,5.4M718.6,440.4l15.1,13.4M718.6,440.4l-18,5.1M751,449l14.5,12.7M751,449l-17.2,4.8M782,457.2l14.5,11.8M782,457.2l-16.5,4.5M813.2,464.2l14.3,11.1M813.2,464.2l-16.7,4.7M843.5,470.8l13.2,10.5M843.5,470.8l-16.1,4.5M871.6,476.9l12.6,10M871.6,476.9l-14.9,4.4M1104.1,529.3l9.5,6.6M1104.1,529.3l-10.8,2.1M1123.7,533.9l8.8,6.5M1123.7,533.9l-10.2,1.9M1142.3,538.7l8.5,6.2M1142.3,538.7l-9.7,1.7M1160.2,543.3l8.1,5.9M1160.2,543.3l-9.4,1.6M1177.1,547.8l7.5,5.6M1177.1,547.8l-8.8,1.4M1192.9,552.1l7.2,5.3M1192.9,552.1l-8.3,1.4M1208,556.1l6.8,5M1208,556.1l-7.9,1.3M1221.8,560.3l5.1,5.5M1221.8,560.3l-7,0.8M1232.4,565.6l4.7,5M1232.4,565.6l-5.6,0.2M1242.3,570.5l4.3,4.5M1242.3,570.5l-5.1,0.1M1251.3,574.9l3.9,4.1M1251.3,574.9l-4.7,0.1M1258.9,579.4l2.9,4M1258.9,579.4l-3.7,-0.4M1265,583.8l2.6,3.5M1265,583.8l-3.2,-0.4M1270.4,587.7l2.1,2.9M1270.4,587.7l-2.8,-0.4M1274.7,590.8l1.8,2.4M1274.7,590.8l-2.2,-0.2M1278.4,593.5l1.5,2.1M1278.4,593.5l-1.9,-0.3M1281.5,595.9l1.2,1.8M1281.5,595.9l-1.6,-0.3M1284.1,597.9l1.1,1.5M1284.1,597.9l-1.3,-0.3M1286.2,599.7l0.9,1.2M1286.2,599.7l-1.1,-0.3M1288,601.1l0.7,1M1288,601.1l-0.9,-0.3M1272.2,589.6l4.1,2.9M1276.4,592.4l3.4,2.3M1280,593.8l2.7,2.3M1279.8,594.8l2.8,2.1M1282.7,596l2.3,2M1282.6,596.9l2.3,1.8M1285,598l1.9,1.7M1284.9,598.7l2,1.5M1286.9,599.7l1.6,1.4M1286.8,600.2l1.6,1.3M1288.5,601.1l1.3,1.2M1288.5,601.5l1.3,1.1M1224.3,565.9l1.6,3.7M1235.5,570.2l3,2.8M1244.9,574.5l2.6,2.4M1253.5,578.5l2.2,2.1M1261.8,580.2l2,1.8M1261.4,582.1l1.9,1.9M1267.5,584.4l2.4,1.2M1267.2,586.1l2.3,1.3M1272.2,589.6l6,3.9M1272.5,588.1l2,1M1272.2,589.6l1.9,1.1M1276.4,592.4l4.8,3.2M1276.6,591.2l1.9,1M1276.4,592.4l1.8,1M1280,593.8l4,2.9M1279.8,594.8l4,2.7M1280,593.8l1.5,0.8M1279.8,594.8l1.4,0.9M1282.7,596l3.3,2.4M1282.6,596.9l3.3,2.3M1282.7,596l1.3,0.6M1282.6,596.9l1.3,0.6M1285,598l2.7,2M1284.9,598.7l2.7,1.9M1285,598l1,0.4M1284.9,598.7l1,0.5M1286.9,599.7l2.2,1.6M1286.8,600.2l2.2,1.5M1286.9,599.7l0.8,0.3M1286.8,600.2l0.8,0.3M1288.5,601.1l1.8,1.3M1288.5,601.5l1.8,1.2M1288.5,601.1l0.6,0.2M1288.5,601.5l0.6,0.2M1289.9,602.3l0.4,0.1M1289.8,602.6l0.4,0.2M699,442.6l15,13.8M699,442.6l-18.6,5.8M731.8,450.9l14.4,13.1M731.8,450.9l-17.8,5.5M763.3,458.9l13.8,12.5M763.3,458.9l-17.1,5.1M793.5,466.5l13.3,11.9M793.5,466.5l-16.4,4.8M823.1,473.5l13.7,10.9M823.1,473.5l-16.3,4.8M852.8,479.7l13.2,10.4M852.8,479.7l-16,4.7M880.9,485.5l12.1,9.7M880.9,485.5l-14.8,4.7M907.1,490.8l11.6,9.3M907.1,490.8l-14.2,4.4M1107.9,533.9l9.2,6.5M1107.9,533.9l-10.8,2.2M1127.5,538.3l8.7,6.3M1127.5,538.3l-10.5,2.1M1145.9,542.7l8.2,6.1M1145.9,542.7l-9.7,1.9M1163.5,547.1l7.9,5.8M1163.5,547.1l-9.4,1.7M1180.4,551.3l7.4,5.6M1180.4,551.3l-8.9,1.6M1196,555.4l6.9,5.2M1196,555.4l-8.2,1.5M1210.8,559.2l6.6,5M1210.8,559.2l-7.8,1.4M1224.8,562.9l5.7,4.9M1224.8,562.9l-7.5,1.3M1236,567.4l4.3,5M1236,567.4l-5.5,0.4M1245.3,572.1l4,4.5M1245.3,572.1l-5,0.3M1253.9,576.3l3.7,4.1M1253.9,576.3l-4.6,0.3M1261.8,580.2l2.6,4M1261.8,580.2l-4.2,0.2M1267.5,584.4l2.3,3.5M1267.5,584.4l-3,-0.2M1272.5,588.1l2,3M1272.5,588.1l-2.7,-0.2M1276.6,591.2l1.5,2.4M1276.6,591.2l-2.1,-0.1M1280,593.8l1.3,2.1M1280,593.8l-1.9,-0.1M1282.7,596l1.1,1.8M1282.7,596l-1.5,-0.2M1285,598l0.9,1.5M1285,598l-1.2,-0.2M1286.9,599.7l0.8,1.2M1286.9,599.7l-1,-0.2M1288.5,601.1l0.6,1M1288.5,601.1l-0.8,-0.2M1289.9,602.3l-0.7,-0.2M1274.1,590.6l4.1,2.9M1278.2,593.5l3,2.1M1281.4,594.6l2.6,2M1281.2,595.6l2.6,1.9M1284,596.6l2,1.8M1283.8,597.5l2,1.7M1286,598.4l1.7,1.6M1285.9,599.2l1.7,1.4M1287.7,600l1.4,1.3M1287.6,600.6l1.4,1.2M1289.1,601.3l1.2,1.1M1289,601.8l1.2,1M1238.5,572.9l0.6,4M1247.5,577l1.5,3.3M1255.8,580.6l1.3,2.9M1263.3,584l1.1,2.6M1269.8,585.6l1.8,2M1269.5,587.3l1.6,2M1274.1,590.6l5.3,4.3M1274.4,589.1l1.5,1.7M1274.1,590.6l1.4,1.7M1278.2,593.5l4.2,3.5M1278.5,592.2l1.3,1.4M1278.2,593.5l1.2,1.4M1281.4,594.6l3.7,3.1M1281.2,595.6l3.6,2.9M1281.4,594.6l1.3,1.3M1281.2,595.6l1.2,1.3M1284,596.6l2.9,2.6M1283.8,597.5l2.9,2.5M1284,596.6l1.1,1M1283.8,597.5l1,1M1286,598.4l2.4,2.2M1285.9,599.2l2.4,2M1286,598.4l0.9,0.8M1285.9,599.2l0.8,0.8M1287.7,600l1.9,1.8M1287.6,600.6l1.9,1.7M1287.7,600l0.7,0.6M1287.6,600.6l0.6,0.6M1289.1,601.3l1.6,1.4M1289,601.8l1.6,1.4M1289.1,601.3l0.5,0.5M1289,601.8l0.5,0.5M1290.3,602.4l1.3,1.2M1290.2,602.8l1.2,1.1M1290.3,602.4l0.4,0.3M1290.2,602.8l0.4,0.4M710.4,456.5l14.2,13.2M742.4,464.1l13.6,12.6M742.4,464.1l-17.9,5.7M773.2,471.3l13.1,12M773.2,471.3l-17.1,5.3M802.7,478.3l12.6,11.4M802.7,478.3l-16.4,5M831,484.9l12.8,10.6M831,484.9l-15.7,4.7M859.9,490.7l12.7,10M859.9,490.7l-16.1,4.8M888.2,496.1l11.6,9.3M888.2,496.1l-15.6,4.6M913.9,500.9l11,8.9M913.9,500.9l-14.2,4.6M1129.8,543.8l8.6,6M1129.8,543.8l-10.5,2.2M1148.3,547.9l7.9,5.9M1148.3,547.9l-9.9,1.9M1165.7,551.9l7.7,5.6M1165.7,551.9l-9.4,1.8M1182.4,555.9l7.3,5.4M1182.4,555.9l-9,1.7M1198.2,559.7l6.7,5.1M1198.2,559.7l-8.5,1.5M1212.7,563.3l6.4,4.8M1212.7,563.3l-7.9,1.5M1226.6,566.7l6.1,4.5M1226.6,566.7l-7.5,1.4M1239.1,570.2l4,4.8M1239.1,570.2l-6.5,1M1248,574.5l3.7,4.4M1248,574.5l-4.9,0.5M1256.2,578.4l3.4,3.9M1256.2,578.4l-4.5,0.4M1263.8,582l3.1,3.6M1263.8,582l-4.1,0.3M1269.8,585.6l2,3.4M1269.8,585.6l-3,-0M1274.4,589.1l1.8,3M1274.4,589.1l-2.6,-0.1M1278.5,592.2l1.3,2.4M1278.5,592.2l-2.2,-0.1M1281.4,594.6l1.2,2M1281.4,594.6l-1.7,0M1284,596.6l0.9,1.8M1284,596.6l-1.4,-0M1286,598.4l0.7,1.5M1286,598.4l-1.1,-0.1M1287.7,600l0.6,1.2M1287.7,600l-1,-0.1M1289.1,601.3l0.5,1M1289.1,601.3l-0.8,-0.1M1290.3,602.4l0.4,0.8M1290.3,602.4l-0.6,-0.1M1279.4,594.9l3,2.1M1282.4,597l2.4,1.6M1285.1,597.6l1.8,1.6M1284.8,598.5l1.9,1.4M1286.9,599.2l1.5,1.4M1286.7,600l1.5,1.2M1288.4,600.6l1.3,1.2M1288.2,601.2l1.3,1M1289.7,601.8l1,1M1289.5,602.3l1.1,0.9M1290.7,602.8l0.9,0.8M1290.6,603.1l0.9,0.7M1239.2,577l-1.6,5M1249,580.3l0.3,4.2M1257,583.6l0.2,3.7M1264.4,586.6l0.1,3.3M1271.6,587.6l0.1,2.9M1271.1,589.4l-0,2.9M1275.9,590.8l0.8,2.3M1275.5,592.3l0.8,2.3M1279.4,594.9l3.8,3.9M1279.7,593.6l0.7,1.9M1279.4,594.9l0.6,1.9M1282.4,597l3,3.1M1282.7,595.9l0.9,1.8M1282.4,597l0.8,1.8M1285.1,597.6l2.5,2.8M1284.8,598.5l2.5,2.6M1285.1,597.6l0.6,1.5M1284.8,598.5l0.5,1.5M1286.9,599.2l2,2.3M1286.7,600l2,2.2M1286.9,599.2l0.6,1.2M1286.7,600l0.6,1.2M1288.4,600.6l1.6,1.9M1288.2,601.2l1.6,1.8M1288.4,600.6l0.5,0.9M1288.2,601.2l0.5,1M1289.7,601.8l1.3,1.5M1289.5,602.3l1.3,1.5M1289.7,601.8l0.4,0.7M1289.5,602.3l0.3,0.7M1290.7,602.8l1.1,1.2M1290.6,603.1l1.1,1.2M1290.7,602.8l0.3,0.6M1290.6,603.1l0.3,0.6M1291.6,603.6l0.2,0.4M1291.5,603.9l0.2,0.4M748.2,480l12.9,11.6M748.2,480l-18.1,5.5M778.5,486.4l12.4,11M778.5,486.4l-17.4,5.2M807.6,492.5l11.9,10.5M807.6,492.5l-16.7,4.9M835.5,498.4l11.5,10M835.5,498.4l-15.9,4.6M863,503.8l12.2,9.2M863,503.8l-16,4.5M890.9,508.6l11.7,8.8M890.9,508.6l-15.8,4.4M917.1,513l10.5,8.1M917.1,513l-14.5,4.4M941.5,516.9l10.1,7.7M941.5,516.9l-13.8,4.2M1129.8,550.6l8.4,5.6M1129.8,550.6l-10.7,2M1148.5,554.2l7.8,5.4M1148.5,554.2l-10.3,1.9M1165.9,557.9l7.4,5.2M1165.9,557.9l-9.6,1.7M1182.5,561.5l7.1,5M1182.5,561.5l-9.2,1.6M1198.4,565l6.7,4.8M1198.4,565l-8.8,1.5M1213.1,568.3l6.1,4.4M1213.1,568.3l-8,1.4M1226.8,571.4l5.9,4.2M1226.8,571.4l-7.6,1.3M1239.9,574.4l4.9,4.1M1239.9,574.4l-7.2,1.2M1249.7,577.9l3.4,4.1M1249.7,577.9l-4.9,0.6M1257.6,581.4l3.1,3.7M1257.6,581.4l-4.5,0.5M1264.9,584.7l2.9,3.3M1264.9,584.7l-4.1,0.4M1271.6,587.6l1.8,3.2M1271.6,587.6l-3.8,0.4M1275.9,590.8l1.6,2.8M1275.9,590.8l-2.5,0M1279.7,593.6l1.4,2.4M1279.7,593.6l-2.2,-0M1282.7,595.9l0.9,1.9M1282.7,595.9l-1.6,0.2M1285.1,597.6l0.7,1.6M1285.1,597.6l-1.5,0.1M1286.9,599.2l0.6,1.4M1286.9,599.2l-1.1,0M1288.4,600.6l0.5,1.1M1288.4,600.6l-0.9,0M1289.7,601.8l0.4,0.9M1289.7,601.8l-0.8,-0M1290.7,602.8l0.4,0.8M1290.7,602.8l-0.6,-0M1291.6,603.6l-0.5,-0.1M1280,596.8l3.2,2M1283.2,598.8l2.2,1.3M1285.7,599.2l1.9,1.3M1285.4,600.1l1.9,1.1M1287.6,600.4l1.4,1.1M1287.3,601.2l1.4,1M1288.9,601.5l1.1,1M1288.7,602.2l1.2,0.8M1290,602.5l0.9,0.8M1289.9,603l1,0.7M1291,603.3l0.8,0.7M1290.9,603.7l0.8,0.6M748.8,497.9l12.5,10.7M778.9,503.4l12.1,10.2M778.9,503.4l-17.6,5.3M807.7,508.6l11.6,9.7M807.7,508.6l-16.8,5M835.5,513.6l11.2,9.2M835.5,513.6l-16.1,4.7M862,518.4l11.5,8.6M862,518.4l-15.4,4.4M889.5,522.6l11.5,8.2M889.5,522.6l-16,4.4M916.4,526.6l10.3,7.5M916.4,526.6l-15.4,4.2M940.7,529.8l9.9,7.1M940.7,529.8l-13.9,4.3M1146.1,561.4l8,5M1146.1,561.4l-10.5,1.9M1163.9,564.7l7.3,4.9M1163.9,564.7l-9.8,1.8M1180.5,567.9l7,4.7M1180.5,567.9l-9.3,1.6M1196.5,571l6.7,4.5M1196.5,571l-8.9,1.5M1211.5,574.1l6.1,4.2M1211.5,574.1l-8.3,1.4M1225.3,576.8l5.8,3.9M1225.3,576.8l-7.7,1.4M1238.4,579.4l5.5,3.7M1238.4,579.4l-7.3,1.3M1250.1,582.1l3.2,3.8M1250.1,582.1l-6.2,1.1M1257.9,585.1l3,3.4M1257.9,585.1l-4.6,0.7M1265.1,588l2.8,3.1M1265.1,588l-4.2,0.6M1271.7,590.6l2.5,2.8M1271.7,590.6l-3.8,0.5M1276.8,593.1l1.4,2.6M1276.8,593.1l-2.6,0.3M1280.4,595.6l1.3,2.3M1280.4,595.6l-2.2,0.2M1283.6,597.7l0.8,1.7M1283.6,597.7l-1.9,0.2M1285.7,599.2l0.8,1.5M1285.7,599.2l-1.4,0.3M1287.6,600.4l0.5,1.3M1287.6,600.4l-1.1,0.2M1288.9,601.5l0.4,1.1M1288.9,601.5l-0.9,0.1M1290,602.5l0.3,0.9M1290,602.5l-0.7,0.1M1291,603.3l0.3,0.7M1291,603.3l-0.6,0.1M1291.8,604l0.2,0.6M1291.8,604l-0.5,0.0" stroke-width="1.0"/>
<path d="M1250.2,606.8l-3.9,-3.3M1258.1,606.7l-3.4,-2.8M1264.9,606.7l-2.9,-2.3M1270.7,606.7l-2.5,-1.8M1275.6,606.6l-2.1,-1.5M1279.6,606.6l-1.8,-1.2M1254.7,604l-3.4,-3.4M1262,604.4l-2.9,-2.9M1268.2,604.8l-2.5,-2.4M1273.5,605.1l-2.2,-1.9M1277.9,605.4l-1.8,-1.5M1281.5,605.7l-1.5,-1.2M1251.3,600.5l-3.1,-3.6M1259.1,601.5l-2.7,-3M1265.7,602.5l-2.4,-2.5M1271.3,603.2l-2,-2M1276,603.9l-1.7,-1.6M1280,604.4l-1.5,-1.3M1256.3,598.5l-2.3,-3.3M1263.3,600l-2,-2.8M1269.3,601.2l-1.7,-2.3M1274.3,602.2l-1.5,-1.9M1278.5,603.1l-1.3,-1.5M1282.1,603.9l-1.1,-1.2M1236.1,590l-2.1,-4.8M1245.7,593l-1.9,-4.1M1254.1,595.2l-1.7,-3.3M1261.3,597.1l-1.6,-2.8M1267.5,598.9l-1.4,-2.4M1272.8,600.3l-1.2,-2M1277.1,601.2l-1.1,-1.7M1277.2,601.6l-1.1,-1.6M1280.8,602.3l-0.9,-1.4M1280.9,602.6l-0.9,-1.3M1183.8,573.8l8.3,4.1M1183.8,573.8l-7.2,0.1M1198.7,577.8l7.6,3.7M1198.7,577.8l-6.6,0.1M1212.4,581.5l6.9,3.3M1212.4,581.5l-6.1,0M1224.7,585.1l6.1,3.2M1224.7,585.1l-5.4,-0.3M1235.6,588.7l5.4,2.8M1235.6,588.7l-4.9,-0.3M1271.6,598.4l4.6,1.6M1276.2,600l3.8,1.3M1280,601.3l3.2,1.1M1223,581.2l-1.2,-5M1234,585.2l-1,-4.8M1243.8,588.9l-1,-4.2M1252.3,591.9l-0.9,-3.4M1259.6,593.3l-0.9,-3M1259.8,594.3l-0.9,-2.9M1266,595.7l-0.8,-2.6M1266.1,596.5l-0.9,-2.5M1271.6,598.4l3.8,-0.1M1271.4,597.7l-0.8,-2.2M1276.2,600l3.2,-0M1276,599.5l-0.7,-1.8M1280,601.3l2.6,0M1279.9,600.9l-0.7,-1.5M1283.1,602.1l-0.6,-1.2M1128.1,554l10.2,5.1M1128.1,554l-9,1.3M1146.9,557.9l9.7,4.8M1146.9,557.9l-8.6,1.2M1164.8,561.7l9.1,4.8M1164.8,561.7l-8.2,1.1M1181.2,566.3l8.2,4.9M1181.2,566.3l-7.3,0.2M1196.2,571l7.5,4.4M1196.2,571l-6.8,0.1M1210,575.4l6.9,4M1210,575.4l-6.2,0.1M1251.4,588.4l7.4,3M1258.8,591.4l6.4,2.6M1265.2,593.1l5.5,2.5M1265.3,594l5.5,2.3M1270.6,595.5l4.7,2.1M1270.8,596.3l4.6,2M1275.3,597.7l3.9,1.8M1275.4,598.3l3.9,1.7M1279.2,599.5l3.3,1.5M1279.3,599.9l3.3,1.4M1195.6,567.2l1,-5.2M1209.3,571.9l0.8,-4.7M1221.8,576.2l0.5,-4.3M1233,580.5l0.6,-4.2M1242.5,583.1l0.5,-3.9M1242.8,584.7l0.4,-3.7M1251.4,588.4l7.6,0.3M1251.2,587.1l0.3,-3.4M1258.8,591.4l6.5,0.3M1258.7,590.3l0.2,-2.8M1265.2,593.1l5.5,0.5M1265.3,594l5.4,0.4M1265.2,593.1l0.1,-2.4M1270.6,595.5l4.5,0.4M1270.8,596.3l4.5,0.4M1270.6,595.5l-0,-2M1275.3,597.7l3.7,0.4M1275.4,598.3l3.7,0.3M1275.3,597.7l-0.1,-1.7M1279.2,599.5l3.1,0.3M1279.3,599.9l3,0.3M1279.2,599.5l-0.2,-1.4M1282.5,600.9l2.5,0.3M1282.6,601.3l2.4,0.3M505.2,417.9l22.9,14.8M547.7,427.5l22,14.1M547.7,427.5l-19.6,5.3M588.5,436.6l21.1,13.4M588.5,436.6l-18.8,5M627.6,445.3l20.2,12.8M627.6,445.3l-18.1,4.7M665.2,453.7l19.5,11.8M665.2,453.7l-17.4,4.4M701.7,460.9l18.9,11.1M701.7,460.9l-17,4.6M737,467.7l18,10.5M737,467.7l-16.4,4.4M1065.1,532.2l11.4,6.5M1065.1,532.2l-10.5,1.8M1086.6,537.1l11,6.2M1086.6,537.1l-10,1.7M1107.2,541.7l10.5,5.9M1107.2,541.7l-9.7,1.6M1127,546.3l10,5.7M1127,546.3l-9.2,1.4M1145.7,550.7l9.5,5.4M1145.7,550.7l-8.8,1.3M1163.5,554.8l9,5.1M1163.5,554.8l-8.4,1.2M1180.3,559.1l8,5.5M1180.3,559.1l-7.8,0.8M1233.6,576.3l9.6,4.7M1243.1,581l8.5,4.2M1251.5,583.7l7.4,3.8M1251.6,585.2l7.4,3.6M1258.9,587.5l6.3,3.1M1259,588.8l6.3,2.9M1265.2,590.7l5.4,2.8M1265.3,591.7l5.4,2.7M1270.6,593.5l4.6,2.5M1270.7,594.4l4.6,2.3M1275.2,596l3.9,2.1M1279.1,598.1l3.2,1.8M1282.3,599.8l2.7,1.5M1147.2,548.6l3.9,-3.5M1164.8,552.9l3.5,-3.3M1181.7,556.9l3.2,-3.1M1196.6,562l3.6,-3.8M1210,567.2l3.1,-3.5M1222.2,569.6l2.8,-3.2M1222.3,571.9l2.6,-3.2M1233.6,576.3l11.7,1.8M1233.4,574.2l2.4,-2.9M1243.1,581l10.2,1.6M1243,579.2l2.3,-3M1251.5,583.7l8.9,1.6M1251.6,585.2l8.8,1.4M1251.5,583.7l1.8,-2.7M1258.9,587.5l7.5,1.3M1259,588.8l7.4,1.1M1258.9,587.5l1.6,-2.2M1265.2,590.7l6.3,1.2M1265.3,591.7l6.3,1M1270.6,593.5l5.2,1M1270.7,594.4l5.2,0.9M1275.2,596l4.3,0.9M1279.1,598.1l3.5,0.8M1282.3,599.8l2.9,0.6M557.2,412.9l20.9,14.8M557.2,412.9l-20,5.4M597.3,422.7l20,14.1M597.3,422.7l-19.2,5M635.7,432.1l19.2,13.5M635.7,432.1l-18.4,4.7M672.6,441.2l18.4,12.8M672.6,441.2l-17.7,4.4M708.3,449.5l18.1,11.7M708.3,449.5l-17.3,4.5M743.1,456.7l17.5,11.2M743.1,456.7l-16.8,4.4M776.5,463.6l16.5,10.6M776.5,463.6l-15.9,4.3M808.2,470.1l15.8,10M808.2,470.1l-15.2,4.1M838.6,476.3l15.1,9.5M838.6,476.3l-14.6,3.8M867.8,482.3l14.4,9.1M867.8,482.3l-14,3.6M895.5,488.2l13.8,8.7M895.5,488.2l-13.3,3.2M922,493.8l13.1,8.2M922,493.8l-12.7,3M947.7,499.4l13.2,8.1M947.7,499.4l-12.5,2.7M973.2,505l12.7,7.8M973.2,505l-12.3,2.5M997.8,510.4l12.3,7.5M997.8,510.4l-11.9,2.3M1021.7,515.6l11.9,7.2M1021.7,515.6l-11.5,2.2M1044.7,520.7l11.5,6.9M1044.7,520.7l-11.2,2.1M1067.1,525.6l11,6.8M1067.1,525.6l-10.8,2M1088.3,530.7l10.6,6.5M1088.3,530.7l-10.3,1.7M1108.8,535.6l10.2,6.2M1108.8,535.6l-9.9,1.6M1128.4,540.4l9.7,6M1128.4,540.4l-9.5,1.4M1235.8,573.4l9.5,4.6M1245.3,578l8,4.6M1253.3,581l7.1,4.3M1253.3,582.6l7.1,4M1260.4,585.3l5.9,3.5M1260.4,586.6l5.9,3.3M1266.4,588.8l5.2,3M1266.4,589.9l5.2,2.8M1271.5,591.8l4.3,2.7M1271.5,592.8l4.3,2.5M1275.9,594.5l3.7,2.3M1279.5,596.9l3.1,2M1282.6,598.8l2.6,1.6M1151.1,545.2l4.7,-0.8M1168.4,549.6l4.4,-0.8M1184.9,553.8l4,-0.7M1200.2,558.2l4,-1.1M1213.1,563.7l4.1,-1.5M1225,566.4l3.8,-1.6M1224.9,568.7l3.6,-1.4M1235.8,573.4l12.6,3M1235.8,571.3l3.2,-1.5M1245.3,578l10.6,3.1M1245.3,576.2l3.2,-1.8M1253.3,581l9.3,2.8M1253.3,582.6l9.2,2.7M1253.3,581l2.7,-1.7M1260.4,585.3l7.8,2.3M1260.4,586.6l7.7,2.2M1260.4,585.3l2.2,-1.5M1266.4,588.8l6.7,1.9M1266.4,589.9l6.6,1.9M1271.5,591.8l5.5,1.7M1271.5,592.8l5.4,1.7M1275.9,594.5l4.5,1.5M1279.5,596.9l3.7,1.2M1282.6,598.8l3,1M574.7,404.5l19.7,15M613.7,414.7l18.9,14.3M613.7,414.7l-19.3,4.8M651.1,424.5l18.1,13.6M651.1,424.5l-18.5,4.5M686.9,433.9l17.4,13M686.9,433.9l-17.8,4.2M721.3,442.9l17,12M721.3,442.9l-17,4M755.3,450.6l16.6,11.3M755.3,450.6l-16.9,4.3M788.2,457.8l15.6,10.7M788.2,457.8l-16.3,4M819.2,464.6l15,10.2M819.2,464.6l-15.3,3.9M848.8,471.1l14.3,9.7M848.8,471.1l-14.7,3.7M877.2,477.3l13.7,9.2M877.2,477.3l-14.1,3.4M904.4,483.3l13,8.8M904.4,483.3l-13.4,3.1M930.2,489.2l12.5,8.3M930.2,489.2l-12.8,2.9M954.9,494.8l12.4,8M954.9,494.8l-12.2,2.7M979.7,500.5l12.2,7.8M979.7,500.5l-12.4,2.3M1004,506.1l11.8,7.5M1004,506.1l-12.1,2.2M1027.5,511.5l11.4,7.2M1027.5,511.5l-11.7,2.1M1050.2,516.7l11.1,6.9M1050.2,516.7l-11.3,2M1072.2,521.7l10.7,6.7M1072.2,521.7l-10.9,1.9M1093.3,526.8l10.1,6.6M1093.3,526.8l-10.4,1.6M1113.4,531.9l9.7,6.3M1113.4,531.9l-9.9,1.5M1132.7,536.8l9.3,6M1132.7,536.8l-9.6,1.4M1151.1,541.6l8.8,5.8M1151.1,541.6l-9.1,1.2M1238.9,572l9.5,4.3M1248.3,576.4l7.5,4.7M1256,579.3l6.6,4.5M1255.9,581.1l6.7,4.2M1262.7,583.8l5.6,3.8M1262.5,585.3l5.7,3.5M1268.3,587.6l4.8,3.1M1268.2,588.9l4.8,2.9M1273.1,590.7l4,2.8M1273,591.8l4,2.6M1277,593.6l3.4,2.4M1280.4,596l2.8,2.1M1283.2,598.1l2.4,1.7M1155.7,544.3l4,2.7M1172.8,548.8l3.9,2.5M1188.9,553.1l3.6,2.4M1204.3,557.1l3.2,2.2M1217.3,562.1l4.1,1.2M1228.7,564.8l3.7,0.9M1228.5,567.3l3.6,1M1238.9,572l12.1,5M1239,569.8l3.2,0.7M1248.3,576.4l10.3,4.9M1248.5,574.4l2.8,0.6M1256,579.3l9,4.4M1255.9,581.1l8.9,4.3M1256,579.3l2.9,0M1262.7,583.8l7.8,3.8M1262.5,585.3l7.7,3.7M1262.7,583.8l2.4,-0M1268.3,587.6l6.4,3.2M1268.2,588.9l6.4,3M1268.3,587.6l2.1,0.1M1273.1,590.7l5.4,2.7M1273,591.8l5.3,2.6M1277,593.6l4.4,2.3M1280.4,596l3.6,1.9M1283.2,598.1l3,1.6M632.6,413.5l17.5,14.8M632.6,413.5l-19.5,5.4M668.8,423.3l16.8,14.1M668.8,423.3l-18.7,5.1M703.5,432.7l16.2,13.5M703.5,432.7l-17.9,4.7M736.9,441.7l15.5,12.8M736.9,441.7l-17.2,4.4M769.3,449.9l15.6,11.7M769.3,449.9l-16.9,4.5M801.5,457.2l15.1,11.2M801.5,457.2l-16.5,4.5M832,464l14,10.6M832,464l-15.5,4.3M860.8,470.5l13.4,10M860.8,470.5l-14.8,4.1M888.4,476.7l12.9,9.5M888.4,476.7l-14.2,3.8M914.9,482.7l12.2,9.1M914.9,482.7l-13.6,3.6M939.9,488.5l11.7,8.7M939.9,488.5l-12.9,3.3M963.9,494.2l11.2,8.2M963.9,494.2l-12.3,3M987.4,499.7l11.6,8.1M987.4,499.7l-12.3,2.7M1011.3,505.2l11.3,7.8M1011.3,505.2l-12.2,2.5M1034.4,510.7l10.9,7.5M1034.4,510.7l-11.8,2.4M1056.7,515.9l10.5,7.2M1056.7,515.9l-11.4,2.2M1078.3,521l10.2,6.9M1078.3,521l-11.1,2.1M1099.2,525.8l9.7,6.8M1099.2,525.8l-10.7,2M1118.9,530.9l9.2,6.5M1118.9,530.9l-10.1,1.7M1137.9,535.8l8.9,6.2M1137.9,535.8l-9.7,1.6M1156,540.6l8.4,6M1156,540.6l-9.3,1.5M648.4,432.5l32,15.9M1221.4,563.3l10.7,5M1232.1,568.3l9.9,4.6M1242.3,570.5l9,4.5M1241.9,572.9l9,4.2M1251.3,574.9l7.6,4.4M1251,577.1l7.6,4.2M1258.9,579.4l6.1,4.4M1258.6,581.3l6.2,4.1M1265,583.8l5.4,3.9M1270.4,587.7l4.3,3.1M683.6,441.3l13.8,11.2M717.4,449.7l12.9,10.6M749.8,457.7l12,10M780.9,465.5l11.2,9.4M812.1,472.1l9.7,9.4M842.5,478.4l9.1,8.9M870.6,484.1l9.1,8.6M897.6,489.6l8.4,8.1M1082.9,529.1l3.9,4.9M1103.5,533.6l3.7,4.7M1123.2,538.1l3.6,4.3M1141.8,542.7l3.4,4.1M1159.7,547.1l3.2,3.8M1176.7,551.4l3.1,3.5M1192.9,552.1l3.1,3.3M1192.5,555.4l3,3.4M1208,556.1l2.8,3.1M1207.5,559.3l2.7,3.1M1221.4,563.3l14.2,6.9M1221.8,560.3l3.1,2.6M1232.1,568.3l12.8,6.2M1232.4,565.6l3.6,1.8M1242.3,570.5l11.6,5.8M1241.9,572.9l11.6,5.6M1242.3,570.5l3.1,1.6M1251.3,574.9l10.5,5.2M1251,577.1l10.5,5.1M1251.3,574.9l2.6,1.3M1258.9,579.4l8.6,5M1258.6,581.3l8.6,4.8M1265,583.8l7.5,4.3M1270.4,587.7l6.1,3.6M898.5,482.7l12.1,9.5M898.5,482.7l-14.2,4.1M924.2,488.3l11.6,9M924.2,488.3l-13.6,3.9M948.8,493.8l11,8.6M948.8,493.8l-12.9,3.6M972.1,499l10.5,8.1M972.1,499l-12.3,3.3M994.3,504.1l10.8,7.9M994.3,504.1l-11.8,3.1M1017.5,509.4l10.8,7.7M1017.5,509.4l-12.4,2.6M1040.2,514.6l10.4,7.4M1040.2,514.6l-12,2.5M1062.2,519.6l10.1,7.1M1062.2,519.6l-11.6,2.4M1083.5,524.5l9.8,6.9M1083.5,524.5l-11.2,2.2M680.4,448.4l27.9,17.7M1224.3,565.9l11.2,4.2M1235.5,570.2l9.4,4.3M1245.3,572.1l8.6,4.2M1244.9,574.5l8.6,4M1253.9,576.3l7.9,3.9M1253.5,578.5l7.9,3.6M1261.8,580.2l5.7,4.2M1261.4,582.1l5.7,3.9M1267.5,584.4l5,3.7M1267.2,586.1l5.1,3.5M1272.5,588.1l4.1,3.1M1276.6,591.2l3.4,2.5M697.4,452.5l10.9,13.7M730.3,460.2l10.2,13M761.8,467.7l9.5,12.3M792.1,474.9l8.8,11.6M821.8,481.5l7.5,11.2M851.6,487.3l6.8,10.8M879.7,492.7l6.9,10.5M906,497.7l6.5,9.9M931.2,502.5l6,9.4M1086.8,534l2.5,6M1107.1,538.3l2.3,5.7M1126.8,542.5l2.1,5.5M1145.2,546.7l2.2,5.1M1162.9,550.9l2,4.8M1179.7,554.9l1.9,4.5M1195.5,558.8l2,4.3M1210.8,559.2l2,4M1210.2,562.4l1.8,4M1224.3,565.9l14.2,7M1224.8,562.9l1.7,3.8M1235.5,570.2l12,6.8M1236,567.4l3.1,2.8M1245.3,572.1l10.9,6.4M1244.9,574.5l10.8,6.1M1245.3,572.1l2.7,2.4M1253.9,576.3l9.8,5.7M1253.5,578.5l9.8,5.5M1253.9,576.3l2.3,2.1M1261.8,580.2l8.1,5.4M1261.4,582.1l8,5.2M1267.5,584.4l7,4.8M1267.2,586.1l6.9,4.6M1272.5,588.1l6,4.1M1276.6,591.2l4.9,3.3M932.3,496l11.1,8.8M932.3,496l-13.6,4.1M956.4,500.9l10.5,8.4M956.4,500.9l-13,3.9M979.1,505.7l10,8M979.1,505.7l-12.2,3.6M1000.8,510.3l9.6,7.5M1000.8,510.3l-11.7,3.3M1022.4,515l10.5,7.6M1022.4,515l-12,2.9M1044.9,520l10.1,7.3M1044.9,520l-12,2.6M1066.6,524.8l9.8,7M1066.6,524.8l-11.6,2.5M1087.6,529.4l9.5,6.7M1087.6,529.4l-11.2,2.4M708.3,466.2l21.8,19.4M1238.5,572.9l9,4M1247.5,577l8.2,3.7M1256.2,578.4l7.5,3.6M1255.8,580.6l7.6,3.4M1263.8,582l6.1,3.6M1263.3,584l6.1,3.3M1269.8,585.6l4.6,3.5M1269.5,587.3l4.7,3.3M1274.4,589.1l4,3.1M1278.5,592.2l3,2.4M740.4,473.2l5.3,15.4M771.3,480l4.9,14.6M800.9,486.5l4.4,13.8M829.3,492.7l4,13M858.3,498.1l2.7,12.7M886.6,503.2l2.4,12.1M912.5,507.6l2.9,11.7M937.2,511.8l2.6,11.1M1109.4,544l-0.1,6.8M1128.9,547.9l-0.2,6.5M1147.5,551.8l-0,6.1M1164.9,555.7l-0,5.7M1181.6,559.4l-0.1,5.4M1197.5,563.1l0,5.1M1212.7,563.3l0.3,5M1212.1,566.4l0.1,4.9M1226.6,566.7l0.2,4.7M1226,569.7l0,4.5M1238.5,572.9l10.5,7.3M1239.1,570.2l0.8,4.2M1247.5,577l9.5,6.6M1248,574.5l1.7,3.4M1256.2,578.4l8.7,6.3M1255.8,580.6l8.6,5.9M1256.2,578.4l1.4,3M1263.8,582l7.8,5.6M1263.3,584l7.8,5.3M1263.8,582l1.2,2.6M1269.8,585.6l6.1,5.2M1269.5,587.3l6.1,4.9M1274.4,589.1l5.3,4.5M1278.5,592.2l4.2,3.7M938.5,505.5l10.6,8.4M938.5,505.5l-13.6,4.3M962.2,509.8l10.2,8M962.2,509.8l-13,4M984.6,514.1l9.6,7.6M984.6,514.1l-12.3,3.7M1005.9,518.2l9.2,7.2M1005.9,518.2l-11.7,3.5M1026.2,522.1l9.7,7.2M1026.2,522.1l-11.2,3.3M1048,526.7l9.8,7M1048,526.7l-12.1,2.6M1069.4,531.2l9.5,6.7M1069.4,531.2l-11.7,2.5M1090.2,535.5l9.2,6.5M1090.2,535.5l-11.3,2.4M1110.3,539.8l8.9,6.2M1110.3,539.8l-10.9,2.3M730.1,485.5l15.9,20.6M1239.2,577l9.9,3.3M1249,580.3l8,3.3M1257.6,581.4l7.3,3.3M1257,583.6l7.3,3M1264.9,584.7l6.7,3M1264.4,586.6l6.7,2.8M1271.6,587.6l4.3,3.2M1271.1,589.4l4.4,2.9M1275.9,590.8l3.8,2.8M1275.5,592.3l3.9,2.6M1279.7,593.6l3,2.3M1282.7,595.9l2.4,1.8M745.8,488.6l0.3,17.6M776.2,494.5l0.1,16.6M805.4,500.2l-0.1,15.8M833.4,505.7l-0.2,14.9M861,510.8l-1.2,14.3M889,515.3l-1.6,13.7M915.3,519.3l-0.9,13.3M939.8,522.9l-0.9,12.6M963.2,526.3l-1,12M1109.3,550.8l-2.6,7.7M1128.7,554.4l-2.6,7.4M1147.5,557.9l-2.5,7M1164.9,561.4l-2.1,6.6M1181.5,564.8l-2.1,6.3M1197.5,568.1l-2,5.9M1212.2,571.3l-1.6,5.6M1226.8,571.4l-1.5,5.4M1226,574.2l-1.6,5.3M1239.2,577l10.2,7.4M1239.9,574.4l-1.5,5.1M1249,580.3l8.2,7M1249.7,577.9l0.4,4.2M1257.6,581.4l7.4,6.6M1257,583.6l7.4,6.3M1257.6,581.4l0.3,3.7M1264.9,584.7l6.7,5.9M1264.4,586.6l6.7,5.7M1264.9,584.7l0.2,3.3M1271.6,587.6l5.2,5.5M1271.1,589.4l5.2,5.2M1275.9,590.8l4.5,4.8M1275.5,592.3l4.5,4.6M1279.7,593.6l3.8,4.1M1282.7,595.9l3,3.3M964.8,520.7l9.7,7.3M964.8,520.7l-13.2,4M987.1,524.2l9.2,7M987.1,524.2l-12.6,3.7M1008.1,527.8l8.7,6.6M1008.1,527.8l-11.9,3.5M1028.2,531.1l8.4,6.3M1028.2,531.1l-11.3,3.2M1048.4,534.7l9.5,6.5M1048.4,534.7l-11.8,2.7M1069.7,538.9l9.2,6.3M1069.7,538.9l-11.9,2.4M1090.4,542.9l8.9,6M1090.4,542.9l-11.5,2.2M1110.4,546.8l8.6,5.8M1110.4,546.8l-11.1,2.1M1249.4,584.4l7.9,2.8M1257.2,587.2l7.2,2.6M1265.1,588l6.6,2.6M1264.5,589.9l6.6,2.4M1271.7,590.6l5.1,2.5M1271.1,592.2l5.2,2.3M1276.8,593.1l3.6,2.5M1276.3,594.6l3.7,2.3M1280.4,595.6l3.2,2.2M1283.6,597.7l2.1,1.5M963.9,532.8l9.5,6.8M963.9,532.8l-13.3,4.1M986.2,535.7l9.1,6.4M986.2,535.7l-12.8,3.8M1007.3,538.6l8.5,6.1M1007.3,538.6l-12,3.6M1027.3,541.3l8.2,5.8M1027.3,541.3l-11.4,3.4M1046.4,543.9l8.9,5.9M1046.4,543.9l-10.9,3.2M1067.3,547.5l9.1,5.9M1067.3,547.5l-12,2.3M1088,551.1l8.8,5.7M1088,551.1l-11.6,2.2M1108,554.7l8.5,5.4M1108,554.7l-11.2,2.1M1127.3,558.1l8.3,5.2M1127.3,558.1l-10.8,2.0" stroke-width="1.5"/>
<path d="M1264.9,606.7l5.8,-0M1270.7,606.7l4.9,-0M1275.6,606.6l4.1,-0M1205.7,604.7l-6.2,-6.5M1218.9,605.5l-5.6,-5.8M1230.7,606.2l-5,-5M1241.1,606.8l-4.5,-4.3M1257.8,606.4l-3.4,-2.9M1264.9,606.7l3.3,-1.9M1264.7,606.4l-3,-2.3M1270.7,606.7l2.8,-1.5M1270.5,606.4l-2.5,-1.9M1275.6,606.6l2.3,-1.2M1275.4,606.4l-2.1,-1.5M1279.5,606.4l1.9,-0.9M1279.6,606.6l1.9,-0.9M1279.5,606.4l-1.8,-1.2M1268.2,604.8l5.2,0.3M1273.5,605.1l4.4,0.3M1277.9,605.4l3.7,0.2M1213.3,599.7l-5.5,-6.7M1225.6,601.2l-4.9,-6M1236.6,602.6l-4.4,-5.1M1246.3,603.4l-3.9,-4.1M1254.4,603.5l-3.4,-3.6M1261.7,604.1l-3,-3M1268.2,604.8l3.1,-1.6M1268,604.5l-2.5,-2.5M1273.5,605.1l2.6,-1.2M1273.3,604.9l-2.2,-2M1277.9,605.4l2.1,-1M1277.7,605.2l-1.8,-1.6M1281.4,605.5l-1.5,-1.3M1265.7,602.5l5.6,0.8M1271.3,603.2l4.7,0.7M1276,603.9l4,0.6M1207.8,593l-4.8,-6.5M1220.7,595.3l-4.4,-6M1232.2,597.4l-3.9,-5.2M1242.4,599.3l-3.5,-4.4M1258.8,601l-2.7,-3.2M1265.7,602.5l3.6,-1.3M1265.4,602.1l-2.4,-2.7M1271.3,603.2l3,-1M1271.1,602.9l-2,-2.2M1276,603.9l2.5,-0.8M1275.9,603.6l-1.7,-1.8M1279.9,604.2l2.1,-0.6M1280,604.4l2.1,-0.6M1279.9,604.2l-1.5,-1.4M1269.3,601.2l5,1M1274.3,602.2l4.2,0.9M1278.5,603.1l3.5,0.7M1216.4,589.3l-3.5,-6.1M1228.3,592.3l-3.1,-5.6M1238.9,594.9l-2.8,-4.9M1248.2,596.9l-2.5,-4M1256,597.8l-2.3,-3.6M1263.1,599.4l-2,-3M1269.3,601.2l3.5,-0.9M1269.1,600.7l-1.7,-2.5M1274.3,602.2l2.9,-0.7M1274.1,601.9l-1.5,-2M1278.5,603.1l2.4,-0.5M1278.4,602.8l-1.3,-1.6M1282,603.6l-1.1,-1.3M1254.1,595.2l7.3,1.9M1261.3,597.1l6.2,1.7M1267.3,598.2l5.3,1.6M1267.5,598.9l5.3,1.5M1272.6,599.8l4.5,1.3M1272.8,600.3l4.4,1.2M1277.1,601.2l3.7,1.1M1277.2,601.6l3.7,1M1184.5,575.9l-2.7,-7.1M1199.3,579.7l-2.6,-6.4M1212.9,583.2l-2.5,-5.8M1225.2,586.6l-2.2,-5.4M1245.3,591.9l-1.9,-4.4M1254.1,595.2l5.7,-0.9M1253.8,594.3l-1.7,-3.6M1261.3,597.1l4.8,-0.6M1261.1,596.4l-1.5,-3M1267.3,598.2l4.1,-0.5M1267.5,598.9l4,-0.5M1267.3,598.2l-1.4,-2.5M1272.6,599.8l3.4,-0.4M1272.8,600.3l3.3,-0.4M1272.6,599.8l-1.2,-2.1M1277.1,601.2l2.8,-0.3M1277.2,601.6l2.8,-0.3M1280.8,602.3l2.3,-0.2M1280.9,602.6l2.2,-0.2M461,453.9l25.2,12M505.7,461.6l24.2,11.4M505.7,461.6l-19.5,4.3M548.7,469l23.2,10.8M548.7,469l-18.8,4M1069.5,550.9l11.9,5.1M1069.5,550.9l-10,1.2M1091,554.9l11.4,4.9M1091,554.9l-9.6,1.2M1111.6,558.8l10.8,4.6M1111.6,558.8l-9.2,1M1131.2,562.4l10.3,4.4M1131.2,562.4l-8.8,1M1149.9,565.9l9.8,4.1M1149.9,565.9l-8.4,0.9M1167.7,569.4l9,4.5M1167.7,569.4l-7.9,0.6M1234,585.2l9.8,3.6M1243.8,588.9l8.6,3M1252.1,590.7l7.5,2.6M1252.3,591.9l7.4,2.4M1259.6,593.3l6.4,2.4M1259.8,594.3l6.4,2.2M1266,595.7l5.5,2M1266.1,596.5l5.4,1.9M1271.4,597.7l4.6,1.7M1276,599.5l3.9,1.5M1279.9,600.9l3.2,1.2M1165.4,564.5l-1.5,-6.5M1181.8,568.9l-1.1,-6.8M1196.7,573.3l-1.1,-6.2M1210.4,577.4l-1.2,-5.6M1222.5,579.3l-1.1,-5.3M1234,585.2l8.8,-0.5M1233.6,583.7l-0.9,-5M1243.8,588.9l7.6,-0.4M1243.5,587.5l-0.9,-4.4M1252.1,590.7l6.6,-0.4M1252.3,591.9l6.5,-0.4M1252.1,590.7l-0.9,-3.6M1259.6,593.3l5.6,-0.3M1259.8,594.3l5.5,-0.3M1266,595.7l4.7,-0.1M1266.1,596.5l4.6,-0.2M1271.4,597.7l3.9,-0.1M1276,599.5l3.2,-0M1279.9,600.9l2.6,0M502.7,438.5l23.7,13.3M502.7,438.5l-19.9,5.1M545.5,447l22.7,12.7M545.5,447l-19.2,4.8M586.7,455.2l21.8,12.1M586.7,455.2l-18.4,4.5M626.1,463l20.9,11.5M626.1,463l-17.7,4.2M664.1,470.2l20.3,10.5M664.1,470.2l-17.1,4.3M701,476.5l19.5,10.1M701,476.5l-16.6,4.2M736.4,482.4l18.6,9.4M736.4,482.4l-15.9,4.1M770.2,488l17.8,8.9M770.2,488l-15.2,3.9M802.6,493.2l17.1,8.5M802.6,493.2l-14.6,3.7M996.3,527.5l13.1,6.5M996.3,527.5l-11.4,2M1020.5,532.1l12.7,6.3M1020.5,532.1l-11,1.9M1043.8,536.5l12.2,6.1M1043.8,536.5l-10.7,1.8M1066.2,541.1l11.7,5.9M1066.2,541.1l-10.2,1.6M1087.7,545.5l11.2,5.6M1087.7,545.5l-9.8,1.5M1108.4,549.8l10.7,5.4M1108.4,549.8l-9.4,1.4M1209.3,571.9l12.5,4.3M1221.8,576.2l11.2,4.3M1232.7,578.6l9.8,4.5M1233,580.5l9.8,4.2M1242.5,583.1l8.7,4M1242.8,584.7l8.7,3.7M1251.2,587.1l7.5,3.2M1258.7,590.3l6.5,2.8M549.1,437.2l8.7,-14.1M589.8,445.8l8,-13.5M1087.1,541l1.5,-6.2M1107.7,545.5l1.3,-5.9M1127.5,549.9l1.2,-5.8M1146.2,554l1,-5.4M1164,558l0.9,-5.1M1180.8,562.1l0.9,-5.1M1195.2,564.5l1.2,-5.4M1209.3,571.9l13,0M1208.9,569.5l0.9,-4.9M1221.8,576.2l11.8,0.1M1221.5,574.1l0.7,-4.4M1232.7,578.6l10.3,0.6M1233,580.5l10.2,0.5M1232.7,578.6l0.7,-4.4M1242.5,583.1l9,0.6M1242.8,584.7l8.9,0.5M1251.2,587.1l7.7,0.4M1258.7,590.3l6.5,0.4M770.7,473.9l17.3,10M770.7,473.9l-15.6,4.3M802.9,479.9l16.5,9.5M802.9,479.9l-14.9,4M833.7,485.7l15.8,9M833.7,485.7l-14.3,3.8M863.3,491.3l15.1,8.6M863.3,491.3l-13.7,3.4M891.4,496.7l14.4,8.2M891.4,496.7l-13.1,3.2M918.3,501.9l14,7.9M918.3,501.9l-12.5,3M944.8,507.3l13.7,7.7M944.8,507.3l-12.4,2.6M970.5,512.6l13.2,7.4M970.5,512.6l-12,2.4M995.3,517.7l12.8,7.1M995.3,517.7l-11.6,2.3M1019.4,522.7l12.4,6.9M1019.4,522.7l-11.3,2.2M1042.7,527.5l12,6.6M1042.7,527.5l-10.9,2.1M537.2,418.3l37.5,-3.6M1181.7,556.9l15,5M1196.6,562l13.4,5.2M1209.9,564.6l12.3,5M1210,567.2l12.3,4.8M1222.2,569.6l11.3,4.6M1222.3,571.9l11.3,4.4M1233.4,574.2l9.6,5M1243,579.2l8.5,4.5M557.8,423.1l16.9,-8.4M597.9,432.4l15.8,-8M636.3,441.3l14.7,-7.7M673.2,449.8l13.8,-7.3M708.8,457.7l12.5,-6.6M743.6,464.6l11.7,-6.2M777,471.1l11.2,-5.8M808.7,477.2l10.5,-5.6M839,483l9.8,-5.3M868.1,488.6l9.1,-5M998.1,515.3l5.9,-4.3M1022,520.3l5.5,-4.2M1045,525.2l5.2,-4M1067.3,529.9l4.9,-3.9M1088.6,534.8l4.7,-3.9M1109,539.5l4.4,-3.7M1128.6,544.1l4.1,-3.6M1147,545.1l4.1,-3.5M1164.6,549.6l3.8,-3.3M1181.7,556.9l18.6,1.2M1181.5,553.8l3.4,-3.1M1196.6,562l16.5,1.7M1196.5,559.1l3.8,-3.9M1209.9,564.6l15.1,1.8M1210,567.2l14.9,1.6M1209.9,564.6l3.3,-3.5M1222.2,569.6l13.6,1.7M1222.3,571.9l13.5,1.5M1233.4,574.2l11.8,2M1243,579.2l10.3,1.8M574.7,414.6l38.4,4.3M1184.9,553.8l15.4,4.4M1200.2,558.2l12.9,5.5M1213.1,561.1l11.8,5.3M1213.1,563.7l11.8,5.1M1225,566.4l10.8,4.9M1224.9,568.7l10.8,4.6M1235.8,571.3l9.5,4.9M1245.3,576.2l8,4.8M613.6,424.3l18.2,-0.6M651,433.6l17,-0.7M686.9,442.5l15.9,-0.7M721.3,451.1l14.9,-0.7M755.3,458.4l13.4,-0.2M788.2,465.2l12.6,-0.2M819.2,471.6l12.3,-0.1M848.8,477.7l11.5,-0.1M877.2,483.6l10.7,-0.2M904.4,489.3l10,-0.3M1004,511l6.9,-0.6M1027.5,516.2l6.5,-0.6M1050.2,521.2l6.1,-0.6M1072.2,526l5.8,-0.6M1093.3,530.9l5.6,-0.7M1113.4,535.8l5.3,-0.7M1132.7,540.5l4.9,-0.7M1151.1,541.6l4.9,-1M1168.4,546.3l4.7,-1M1184.9,553.8l19.4,3.3M1184.9,550.7l4.3,-0.9M1200.2,558.2l17,4M1200.3,555.3l4.3,-1.3M1213.1,561.1l15.6,3.7M1213.1,563.7l15.4,3.6M1213.1,561.1l4.3,-1.8M1225,566.4l14.1,3.4M1224.9,568.7l13.9,3.3M1235.8,571.3l12.7,3.1M1245.3,576.2l10.7,3.2M613.1,418.9l35.3,13.6M1188.9,553.1l15.4,4M1204.3,557.1l13,5M1217.5,559.3l11.2,5.5M1217.3,562.1l11.3,5.2M1228.7,564.8l10.3,5M1228.5,567.3l10.3,4.7M1239,569.8l9.5,4.6M1248.5,574.4l7.5,5M631.8,423.7l16.6,8.8M668.1,432.9l15.5,8.3M702.9,441.8l14.5,7.8M736.2,450.4l13.6,7.4M768.7,458.2l12.2,7.3M800.9,465l11.3,7.1M831.4,471.5l11.1,6.9M860.3,477.6l10.4,6.5M887.9,483.4l9.7,6.1M914.4,489l9,5.8M1034,515.6l5.6,4M1056.3,520.6l5.2,3.8M1078,525.5l4.9,3.6M1098.9,530.2l4.6,3.4M1118.6,535l4.6,3.1M1137.6,539.8l4.2,2.9M1173.1,545.3l4.1,2.5M1188.9,553.1l18.6,6.2M1189.2,549.8l3.8,2.3M1204.3,557.1l17.1,6.2M1204.5,554l3.4,2.1M1217.5,559.3l15,6.3M1217.3,562.1l14.8,6.1M1217.5,559.3l4.3,1M1228.7,564.8l13.5,5.7M1228.5,567.3l13.4,5.6M1239,569.8l12.2,5.2M1248.5,574.4l10.4,5M649.8,422.2l32.3,16.2M648.4,432.5l35.2,8.8M683.6,441.3l33.8,8.4M717.4,449.7l32.4,8.1M749.8,457.7l31.1,7.7M780.9,465.5l31.2,6.6M812.1,472.1l30.4,6.3M1123.2,538.1l18.6,4.6M1141.8,542.7l17.9,4.4M1159.7,547.1l17,4.3M1177.1,547.8l15.8,4.3M1176.7,551.4l15.8,4.1M1192.9,552.1l15,4.1M1192.5,555.4l15.1,3.9M1208,556.1l13.8,4.2M1207.5,559.3l13.8,4M1221.8,560.3l10.7,5.3M1232.4,565.6l9.8,4.9M648.4,432.5l49,20M683.6,441.3l46.7,19M684.9,431.5l14.1,11.1M717.4,449.7l44.4,18.1M718.6,440.4l13.2,10.5M749.8,457.7l42.3,17.2M751,449l12.3,9.9M780.9,465.5l40.9,16M782,457.2l11.5,9.4M812.1,472.1l39.5,15.2M813.2,464.2l9.9,9.4M843.5,470.8l9.3,8.9M871.6,476.9l9.3,8.6M898.5,482.7l8.7,8.1M923.4,494.8l7.8,7.7M947.9,499.9l7.4,7.2M971.3,504.8l6.8,6.7M993.6,509.5l6.3,6.3M1016.8,514.6l4.8,5.6M1039.5,519.6l4.5,5.4M1061.6,524.4l4.2,5.1M1083.5,524.5l4.1,4.9M1104.1,529.3l3.8,4.7M1123.2,538.1l22.1,8.6M1123.7,533.9l3.8,4.3M1141.8,542.7l21.1,8.2M1142.3,538.7l3.6,4M1159.7,547.1l20.1,7.8M1160.2,543.3l3.3,3.8M1177.1,547.8l18.9,7.6M1176.7,551.4l18.8,7.4M1177.1,547.8l3.2,3.5M1192.9,552.1l17.9,7.2M1192.5,555.4l17.8,7M1208,556.1l16.9,6.8M1207.5,559.3l16.8,6.6M1221.8,560.3l14.2,7.1M1232.4,565.6l12.9,6.4M682.1,438.3l28.3,18.2M680.4,448.4l17,4M697.4,452.5l32.9,7.8M730.3,460.2l31.6,7.5M761.8,467.7l30.3,7.2M792.1,474.9l29.7,6.6M821.8,481.5l29.8,5.8M851.6,487.3l28.1,5.4M1145.2,546.7l17.6,4.2M1162.9,550.9l16.9,4M1180.4,551.3l15.7,4.1M1179.7,554.9l15.7,3.9M1196,555.4l14.8,3.9M1195.5,558.8l14.8,3.7M1210.8,559.2l14.1,3.7M1210.2,562.4l14.1,3.5M1224.8,562.9l11.2,4.5M1236,567.4l9.3,4.6M697.4,452.5l43.1,20.8M699,442.6l11.4,13.9M730.3,460.2l41.1,19.7M731.8,450.9l10.6,13.2M761.8,467.7l39.1,18.8M763.3,458.9l9.9,12.4M792.1,474.9l37.2,17.8M793.5,466.5l9.2,11.7M821.8,481.5l36.5,16.6M823.1,473.5l7.9,11.4M851.6,487.3l35,15.9M852.8,479.7l7.1,11M880.9,485.5l7.2,10.6M907.1,490.8l6.8,10M955.3,507l5.5,8.8M978.1,511.5l5.2,8.3M999.9,515.8l4.8,7.8M1021.6,520.2l3.6,7M1044,524.9l2.9,6.6M1065.8,529.5l2.7,6.3M1107.9,533.9l2.5,5.8M1127.5,538.3l2.3,5.6M1145.2,546.7l19.7,8.9M1145.9,542.7l2.4,5.1M1162.9,550.9l18.8,8.5M1163.5,547.1l2.2,4.9M1180.4,551.3l17.8,8.4M1179.7,554.9l17.7,8.2M1180.4,551.3l2,4.6M1196,555.4l16.7,7.9M1195.5,558.8l16.6,7.6M1196,555.4l2.2,4.3M1210.8,559.2l15.8,7.4M1210.2,562.4l15.7,7.2M1224.8,562.9l14.3,7.3M1236,567.4l12,7M710.4,456.5l22.2,20.2M708.3,466.2l32.2,7.1M740.4,473.2l30.9,6.8M771.3,480l29.6,6.5M800.9,486.5l28.4,6.2M829.3,492.7l29,5.4M858.3,498.1l28.3,5.1M1147.5,551.8l17.4,3.9M1164.9,555.7l16.7,3.7M1181.6,559.4l15.8,3.7M1198.2,559.7l14.5,3.6M1197.5,563.1l14.6,3.4M1212.7,563.3l13.9,3.4M1212.1,566.4l13.9,3.2M1226.6,566.7l12.5,3.5M1226,569.7l12.6,3.3M1239.1,570.2l8.9,4.3M1248,574.5l8.2,3.9M708.3,466.2l37.5,22.4M740.4,473.2l35.7,21.3M742.4,464.1l5.8,16M771.3,480l34.1,20.3M773.2,471.3l5.3,15.1M800.9,486.5l32.4,19.2M802.7,478.3l4.9,14.3M829.3,492.7l31.7,18.1M831,484.9l4.5,13.5M858.3,498.1l30.7,17.2M859.9,490.7l3,13.2M888.2,496.1l2.8,12.5M913.9,500.9l3.2,12.1M938.5,505.5l2.9,11.5M960.9,515.9l2.3,10.5M983.4,519.8l2.2,9.8M1004.7,523.6l2,9.2M1025.1,527.2l1.7,8.7M1046.9,531.5l0.2,7.7M1068.4,535.8l0.1,7.4M1089.3,540l-0,7.1M1110.3,539.8l0.1,7.1M1129.8,543.8l-0,6.7M1147.5,551.8l17.4,9.6M1148.3,547.9l0.2,6.3M1164.9,555.7l16.6,9.2M1165.7,551.9l0.2,6M1181.6,559.4l15.9,8.7M1182.4,555.9l0.1,5.7M1198.2,559.7l14.9,8.6M1197.5,563.1l14.7,8.2M1198.2,559.7l0.2,5.3M1212.7,563.3l14.1,8.1M1212.1,566.4l13.9,7.8M1226.6,566.7l13.3,7.7M1226,569.7l13.2,7.3M1239.1,570.2l10.6,7.7M1248,574.5l9.6,6.9M732.6,476.7l16.2,21.2M730.1,485.5l15.7,3.1M745.8,488.6l30.4,5.9M776.2,494.5l29.2,5.7M805.4,500.2l28,5.5M833.4,505.7l27.6,5.1M861,510.8l28,4.5M889,515.3l26.3,4.1M1164.9,561.4l16.6,3.4M1181.5,564.8l15.9,3.3M1198.4,565l14.7,3.3M1197.5,568.1l14.7,3.2M1213.1,568.3l13.7,3.1M1212.2,571.3l13.8,2.9M1226.8,571.4l13.1,2.9M1226,574.2l13.2,2.8M1239.9,574.4l9.8,3.5M1249.7,577.9l7.9,3.5M745.8,488.6l30.5,22.6M748.2,480l0.5,17.9M776.2,494.5l29.1,21.5M778.5,486.4l0.3,17M805.4,500.2l27.8,20.4M807.6,492.5l0.2,16.1M833.4,505.7l26.5,19.3M835.5,498.4l-0,15.2M861,510.8l26.4,18.2M863,503.8l-0.9,14.6M889,515.3l25.4,17.4M890.9,508.6l-1.4,14M917.1,513l-0.7,13.6M941.5,516.9l-0.7,12.9M985.6,529.6l-1.1,11.3M1006.7,532.8l-1,10.6M1026.8,535.9l-1.1,10M1047.1,539.2l-2.1,9M1068.5,543.2l-2.6,8.4M1089.2,547.1l-2.6,8M1129.8,550.6l-2.4,7.5M1148.5,554.2l-2.4,7.2M1164.9,561.4l14.6,9.7M1165.9,557.9l-2,6.8M1181.5,564.8l13.9,9.2M1182.5,561.5l-2,6.4M1198.4,565l13.1,9.1M1197.5,568.1l13.1,8.8M1198.4,565l-1.9,6M1213.1,568.3l12.2,8.5M1212.2,571.3l12.2,8.2M1213.1,568.3l-1.5,5.8M1226.8,571.4l11.6,8M1226,574.2l11.6,7.7M1239.9,574.4l10.2,7.7M1249.7,577.9l8.2,7.3M746,506.2l30.2,5M776.3,511.2l29,4.8M805.3,516l27.8,4.6M833.1,520.6l26.7,4.4M859.8,525l27.6,3.9M887.4,528.9l27,3.7M1162.8,568l16.7,3.1M1179.4,571.1l16,3M1195.5,574l15.1,2.9M1211.5,574.1l13.8,2.7M1210.6,576.9l13.8,2.6M1225.3,576.8l13.1,2.6M1224.4,579.5l13.2,2.4M1238.4,579.4l11.7,2.6M1237.6,582l11.8,2.5M1250.1,582.1l7.8,3.1M1257.9,585.1l7.2,2.8" stroke-width="2.0"/>
<path d="M1230.7,606.2l10.4,0.6M1241.1,606.8l9.1,-0.1M1249.8,606.3l8,0M1250.2,606.8l7.9,-0M1257.8,606.4l6.9,0M1258.1,606.7l6.8,-0M1264.7,606.4l5.8,0M1270.5,606.4l4.9,0M1275.4,606.4l4.1,0M1158.5,601.7l-7.9,-8.8M1175.6,602.8l-7.3,-8.1M1191.3,603.8l-6.7,-7.2M1218.3,604.8l-5.7,-5.9M1230.7,606.2l6,-3.7M1230.1,605.6l-5.1,-5.1M1241.1,606.8l5.2,-3.4M1240.6,606.3l-4.5,-4.3M1249.8,606.3l4.5,-2.8M1250.2,606.8l4.5,-2.8M1249.8,606.3l-4,-3.4M1257.8,606.4l3.9,-2.3M1258.1,606.7l3.9,-2.3M1264.7,606.4l3.3,-1.9M1270.5,606.4l2.8,-1.5M1275.4,606.4l2.3,-1.2M1236.6,602.6l9.7,0.9M1246.3,603.4l8.4,0.5M1254.4,603.5l7.3,0.5M1254.7,604l7.3,0.5M1261.7,604.1l6.3,0.5M1262,604.4l6.2,0.4M1268,604.5l5.3,0.4M1273.3,604.9l4.4,0.3M1277.7,605.2l3.7,0.3M1168.3,594.8l-7,-9.2M1184.6,596.6l-6.4,-8.3M1199.6,598.2l-5.9,-7.5M1225.1,600.5l-4.9,-6.2M1236.6,602.6l5.8,-3.3M1236.1,602l-4.4,-5.4M1246.3,603.4l5,-2.9M1245.9,602.9l-3.9,-4.3M1254.4,603.5l4.4,-2.5M1254.7,604l4.3,-2.4M1261.7,604.1l3.7,-2M1262,604.4l3.7,-2M1268,604.5l3.1,-1.6M1273.3,604.9l2.6,-1.3M1277.7,605.2l2.2,-1M1232.2,597.4l10.2,1.9M1242.4,599.3l8.9,1.2M1251,599.9l7.8,1.1M1251.3,600.5l7.7,1M1258.8,601l6.7,1M1259.1,601.5l6.6,0.9M1265.4,602.1l5.7,0.9M1271.1,602.9l4.8,0.7M1275.9,603.6l4,0.6M1161.3,585.5l-6,-8.6M1178.2,588.2l-5.6,-8M1193.6,590.8l-5.2,-7.2M1220.1,594.3l-4.4,-6.3M1232.2,597.4l6.7,-2.6M1231.7,596.6l-3.9,-5.5M1242.4,599.3l5.8,-2.4M1242,598.6l-3.5,-4.7M1251,599.9l5.1,-2.1M1251.3,600.5l5,-2M1251,599.9l-3.1,-3.8M1258.8,601l4.3,-1.7M1259.1,601.5l4.3,-1.6M1265.4,602.1l3.6,-1.3M1271.1,602.9l3,-1M1275.9,603.6l2.5,-0.8M1238.9,594.9l9.3,2.1M1248.2,596.9l8.1,1.6M1256,597.8l7,1.6M1256.3,598.5l7,1.4M1263.1,599.4l6,1.3M1263.3,600l6,1.2M1269.1,600.7l5.1,1.1M1274.1,601.9l4.3,1M1278.4,602.8l3.5,0.8M1172.6,580.2l-4.2,-8.4M1188.5,583.5l-3.9,-7.6M1203,586.6l-3.7,-6.8M1227.8,591.1l-3.1,-6M1238.9,594.9l6.8,-1.9M1238.4,593.9l-2.8,-5.2M1248.2,596.9l5.8,-1.7M1247.8,596.1l-2.5,-4.2M1256,597.8l5.1,-1.5M1256.3,598.5l5,-1.4M1263.1,599.4l4.3,-1.1M1263.3,600l4.2,-1.1M1269.1,600.7l3.6,-0.9M1274.1,601.9l3,-0.7M1278.4,602.8l2.4,-0.5M1225.2,586.6l10.9,3.4M1235.6,588.7l9.7,3.2M1236.1,590l9.6,3M1245.3,591.9l8.4,2.4M1245.7,593l8.4,2.2M1253.8,594.3l7.3,2.1M1261.1,596.4l6.2,1.9M1132.1,565.1l-3.2,-8M1150.8,568.4l-3.2,-7.5M1168.4,571.8l-3,-7.3M1198.7,577.8l-2.5,-6.8M1212.4,581.5l-2.4,-6.1M1225.2,586.6l8.8,-1.4M1224.7,585.1l-2.2,-5.8M1235.6,588.7l7.8,-1.2M1236.1,590l7.7,-1.1M1235.6,588.7l-2,-5.1M1245.3,591.9l6.7,-1.2M1245.7,593l6.6,-1.1M1253.8,594.3l5.8,-1M1261.1,596.4l4.9,-0.7M589.9,476l22.2,10.3M589.9,476l-18,3.8M629.4,482.8l21.4,9.6M629.4,482.8l-17.3,3.5M667.6,488.6l20.6,9M667.6,488.6l-16.8,3.7M704.5,494.2l19.8,8.4M704.5,494.2l-16.2,3.5M739.8,499.1l18.9,8M739.8,499.1l-15.5,3.5M773.6,503.7l18.1,7.6M773.6,503.7l-14.9,3.3M806.1,508.2l17.3,7.2M806.1,508.2l-14.3,3.1M837.1,512.5l16.5,6.9M837.1,512.5l-13.7,2.9M866.7,516.7l15.8,6.5M866.7,516.7l-13.1,2.7M922.5,525.3l14.7,6.4M922.5,525.3l-12.2,1.9M949.1,529.9l14.3,6.1M949.1,529.9l-11.9,1.8M974.9,534.3l13.8,5.9M974.9,534.3l-11.5,1.7M999.8,538.6l13.3,5.7M999.8,538.6l-11.1,1.6M1023.9,542.7l12.9,5.5M1023.9,542.7l-10.8,1.6M1047.2,546.8l12.3,5.4M1047.2,546.8l-10.4,1.4M1196.7,573.3l13.7,4.1M1210.4,577.4l12.5,3.8M1222.5,579.3l11.1,4.3M1223,581.2l11,4.1M1233.6,583.7l9.8,3.8M1243.5,587.5l8.6,3.2M504.8,447.7l1.9,-19.5M547.5,455.8l1.6,-18.6M588.6,463.5l1.2,-17.7M627.9,470.9l1,-16.8M665.8,477.7l0.5,-15.7M1067.1,544.8l-1.4,-8.4M1088.5,549.1l-1.4,-8M1109.2,553.2l-1.4,-7.7M1128.9,557.2l-1.4,-7.3M1147.6,560.9l-1.4,-6.9M1181.2,566.3l-0.9,-7.2M1196.7,573.3l12.5,-1.5M1196.2,571l-1,-6.5M1210.4,577.4l11.3,-1.3M1210,575.4l-1,-5.9M1222.5,579.3l10.2,-0.7M1223,581.2l10,-0.7M1233.6,583.7l8.9,-0.5M1243.5,587.5l7.8,-0.4M833.7,498.3l16.3,8.1M833.7,498.3l-14,3.4M863.3,503.3l15.5,7.7M863.3,503.3l-13.4,3.1M891.7,508.1l14.8,7.3M891.7,508.1l-12.8,2.9M918.9,512.8l14.5,7.3M918.9,512.8l-12.4,2.5M945.6,517.9l14,7M945.6,517.9l-12.1,2.3M971.4,522.8l13.6,6.8M971.4,522.8l-11.7,2.2M506.7,428.2l30.5,-9.9M1146.2,554l17.8,4M1164,558l16.8,4.1M1180.8,562.1l14.9,5.1M1195.2,564.5l13.7,5M1195.6,567.2l13.6,4.7M1208.9,569.5l12.6,4.6M1221.5,574.1l11.2,4.6M628.9,454.1l7.4,-12.8M666.3,462l6.8,-12.2M702.8,468.8l5.9,-11.1M738.1,475.2l5.5,-10.7M771.7,481.1l5.3,-10M803.8,486.7l4.8,-9.5M834.7,492.1l4.4,-9.1M864.1,497.3l4,-8.7M892.2,502.4l3.6,-8.2M945.5,512.4l2.5,-7.7M971.2,517.5l2.3,-7.4M996,522.4l2.1,-7.1M1020.1,527.2l1.9,-6.9M1043.3,531.8l1.7,-6.6M1065.7,536.4l1.6,-6.5M1127,546.3l1.4,-5.9M1146.2,554l18.7,-1.1M1145.7,550.7l1.3,-5.6M1164,558l17.7,-1.1M1163.5,554.8l1.1,-5.3M1180.8,562.1l15.9,-0.1M1180.3,559.1l1.1,-5.3M1195.2,564.5l14.6,0.1M1195.6,567.2l14.4,-0M1208.9,569.5l13.2,0.1M1221.5,574.1l12,0.2M536.5,407.8l38.2,-3.3M537.2,418.3l20.6,4.8M557.8,423.1l40,9.3M597.9,432.4l38.4,8.9M636.3,441.3l36.9,8.6M673.2,449.8l35.6,7.8M708.8,457.7l34.9,6.9M1088.6,534.8l20.4,4.7M1109,539.5l19.6,4.6M1128.6,544.1l18.6,4.5M1147,545.1l17.7,4.5M1147.2,548.6l17.6,4.3M1164.6,549.6l16.8,4.3M1164.8,552.9l16.8,4.1M1181.5,553.8l15,5.3M1196.5,559.1l13.4,5.5M557.8,423.1l55.8,1.3M557.2,412.9l17.5,-8.4M597.9,432.4l53.2,1.2M597.3,422.7l16.4,-8M636.3,441.3l50.6,1.2M635.7,432.1l15.3,-7.7M673.2,449.8l48.2,1.2M672.6,441.2l14.3,-7.3M708.8,457.7l46.5,0.7M708.3,449.5l13.1,-6.6M743.1,456.7l12.2,-6.2M776.5,463.6l11.7,-5.8M808.2,470.1l11,-5.5M895.9,494.2l8.5,-4.9M922.4,499.5l7.8,-4.6M948,504.7l6.8,-4.6M973.5,510.1l6.2,-4.5M1044.7,520.7l5.5,-4M1067.1,525.6l5.1,-3.8M1088.6,534.8l24.8,1M1088.3,530.7l5,-3.9M1109,539.5l23.7,1M1108.8,535.6l4.6,-3.7M1128.6,544.1l22.5,1M1128.4,540.4l4.3,-3.6M1147,545.1l21.4,1.2M1147.2,548.6l21.2,1M1164.6,549.6l20.3,1.1M1164.8,552.9l20,0.9M1181.5,553.8l18.8,1.5M1196.5,559.1l16.7,1.9M574.7,404.5l39.2,3.9M574.7,414.6l39,9.7M613.6,424.3l37.4,9.3M651,433.6l35.9,8.9M686.9,442.5l34.4,8.5M721.3,451.1l34,7.3M755.3,458.4l32.9,6.9M1093.3,530.9l20.1,4.9M1113.4,535.8l19.3,4.7M1132.7,540.5l18.4,4.7M1151.1,541.6l17.3,4.6M1151.1,545.2l17.3,4.4M1168.4,546.3l16.5,4.4M1168.4,549.6l16.5,4.2M1184.9,550.7l15.4,4.6M1200.3,555.3l12.9,5.8M574.7,414.6l57.1,9M613.6,424.3l54.4,8.6M613.7,414.7l18.9,-1.2M651,433.6l51.8,8.2M651.1,424.5l17.7,-1.2M686.9,442.5l49.3,7.8M686.9,433.9l16.6,-1.2M721.3,451.1l47.4,7.1M721.3,442.9l15.5,-1.2M755.3,458.4l45.6,6.7M755.3,450.6l14,-0.6M788.2,457.8l13.2,-0.6M819.2,464.6l12.8,-0.5M848.8,471.1l12,-0.5M930.2,494.8l9.3,-0.3M954.9,500.1l8.6,-0.3M979.7,505.6l7.3,-0.6M1050.2,516.7l6.5,-0.8M1072.2,521.7l6.1,-0.8M1093.3,530.9l25.3,4.2M1093.3,526.8l5.9,-0.9M1113.4,535.8l24.2,4M1113.4,531.9l5.6,-1M1132.7,540.5l23.1,3.8M1132.7,536.8l5.2,-0.9M1151.1,541.6l22,3.7M1151.1,545.2l21.7,3.7M1168.4,546.3l20.8,3.5M1168.4,549.6l20.5,3.5M1184.9,550.7l19.6,3.3M1200.3,555.3l17.2,4M613.9,408.4l35.9,13.7M613.1,418.9l18.7,4.8M631.8,423.7l36.3,9.3M668.1,432.9l34.8,8.9M702.9,441.8l33.4,8.5M736.2,450.4l32.5,7.8M768.7,458.2l32.2,6.9M800.9,465l30.6,6.5M1118.6,535l18.9,4.7M1137.6,539.8l18.2,4.6M1156,540.6l17,4.7M1155.7,544.3l17.1,4.5M1173.1,545.3l16.1,4.4M1172.8,548.8l16.1,4.2M1189.2,549.8l15.4,4.2M1204.5,554l12.9,5.3M631.8,423.7l51.8,17.6M632.6,413.5l17.2,8.7M668.1,432.9l49.3,16.7M668.8,423.3l16.1,8.2M702.9,441.8l47,15.9M703.5,432.7l15.1,7.7M736.2,450.4l44.7,15.1M736.9,441.7l14.1,7.3M768.7,458.2l43.4,14M769.3,449.9l12.7,7.2M800.9,465l41.6,13.4M801.5,457.2l11.7,7M832,464l11.5,6.8M860.8,470.5l10.8,6.4M939.5,494.5l8.4,5.3M963.5,499.8l7.8,5M987,505l6.6,4.5M1010.9,510.4l5.9,4.2M1078.3,521l5.2,3.6M1099.2,525.8l4.9,3.4M1118.6,535l23.2,7.6M1118.9,530.9l4.8,3M1137.6,539.8l22.1,7.3M1137.9,535.8l4.5,2.9M1156,540.6l21.1,7.2M1155.7,544.3l20.9,7M1156,540.6l4.2,2.7M1173.1,545.3l19.9,6.7M1172.8,548.8l19.7,6.6M1189.2,549.8l18.8,6.4M1204.5,554l17.2,6.3M649.8,422.2l35.1,9.3M684.9,431.5l33.7,8.9M718.6,440.4l32.4,8.6M751,449l31,8.2M782,457.2l31.2,7M813.2,464.2l30.3,6.6M843.5,470.8l28.1,6.1M842.5,478.4l28.1,5.7M871.6,476.9l26.9,5.8M870.6,484.1l26.9,5.5M898.5,482.7l25.8,5.6M897.6,489.6l25.8,5.2M923.4,494.8l24.6,5.1M947.9,499.9l23.4,4.9M971.3,504.8l22.3,4.7M993.6,509.5l23.2,5.1M1016.8,514.6l22.8,5M1039.5,519.6l22,4.8M1061.6,524.4l21.3,4.7M1083.5,524.5l20.6,4.7M1082.9,529.1l20.6,4.5M1104.1,529.3l19.7,4.7M1103.5,533.6l19.7,4.5M1123.7,533.9l18.6,4.8M1142.3,538.7l17.9,4.6M1160.2,543.3l17,4.5M649.8,422.2l49.2,20.4M684.9,431.5l46.9,19.4M718.6,440.4l44.7,18.5M751,449l42.5,17.6M782,457.2l41.1,16.4M813.2,464.2l39.7,15.5M843.5,470.8l37.4,14.7M842.5,478.4l37.2,14.3M871.6,476.9l35.5,13.9M870.6,484.1l35.4,13.6M898.5,482.7l33.8,13.2M897.6,489.6l33.6,12.9M923.4,494.8l32,12.2M924.2,488.3l8.1,7.6M947.9,499.9l30.2,11.7M948.8,493.8l7.6,7.1M971.3,504.8l28.6,11M972.1,499l7,6.7M993.6,509.5l28,10.7M994.3,504.1l6.5,6.3M1016.8,514.6l27.2,10.4M1017.5,509.4l5,5.6M1039.5,519.6l26.2,10M1040.2,514.6l4.7,5.4M1061.6,524.4l25.2,9.6M1062.2,519.6l4.4,5.1M1083.5,524.5l24.4,9.4M1082.9,529.1l24.3,9.2M1104.1,529.3l23.5,9M1103.5,533.6l23.3,8.8M1123.7,533.9l22.2,8.8M1142.3,538.7l21.2,8.4M1160.2,543.3l20.2,8M682.1,438.3l16.9,4.3M699,442.6l32.8,8.3M731.8,450.9l31.5,8M763.3,458.9l30.2,7.6M793.5,466.5l29.6,7M823.1,473.5l29.7,6.2M852.8,479.7l28.1,5.8M880.9,485.5l26.2,5.3M879.7,492.7l26.3,5M907.1,490.8l25.1,5.1M906,497.7l25.2,4.8M932.3,496l24.1,4.9M931.2,502.5l24.1,4.6M955.3,507l22.8,4.5M978.1,511.5l21.8,4.3M999.9,515.8l21.6,4.4M1021.6,520.2l22.5,4.8M1044,524.9l21.7,4.6M1065.8,529.5l21,4.4M1087.6,529.4l20.3,4.5M1086.8,534l20.3,4.3M1107.9,533.9l19.6,4.3M1107.1,538.3l19.7,4.2M1127.5,538.3l18.4,4.5M1126.8,542.5l18.4,4.3M1145.9,542.7l17.6,4.3M1163.5,547.1l16.9,4.2M699,442.6l43.4,21.4M731.8,450.9l41.4,20.4M763.3,458.9l39.4,19.4M793.5,466.5l37.5,18.4M823.1,473.5l36.8,17.1M852.8,479.7l35.3,16.4M880.9,485.5l33,15.4M879.7,492.7l32.8,14.9M907.1,490.8l31.4,14.6M906,497.7l31.2,14.1M932.3,496l29.9,13.9M931.2,502.5l29.7,13.4M932.3,496l6.3,9.5M955.3,507l28,12.8M956.4,500.9l5.8,9M978.1,511.5l26.6,12.1M979.1,505.7l5.5,8.4M999.9,515.8l25.2,11.4M1000.8,510.3l5,7.9M1021.6,520.2l25.4,11.3M1022.4,515l3.8,7.1M1044,524.9l24.4,10.9M1044.9,520l3.1,6.7M1065.8,529.5l23.5,10.4M1066.6,524.8l2.9,6.4M1087.6,529.4l22.8,10.3M1086.8,534l22.6,10M1087.6,529.4l2.7,6.1M1107.9,533.9l21.9,9.9M1107.1,538.3l21.8,9.6M1127.5,538.3l20.8,9.6M1126.8,542.5l20.7,9.3M1145.9,542.7l19.8,9.2M1163.5,547.1l18.9,8.8M710.4,456.5l32.1,7.5M742.4,464.1l30.8,7.2M773.2,471.3l29.5,6.9M802.7,478.3l28.3,6.7M831,484.9l28.9,5.8M859.9,490.7l28.2,5.4M888.2,496.1l25.8,4.8M886.6,503.2l25.8,4.4M913.9,500.9l24.6,4.6M912.5,507.6l24.7,4.2M938.5,505.5l23.6,4.4M937.2,511.8l23.7,4M960.9,515.9l22.5,3.9M983.4,519.8l21.3,3.8M1004.7,523.6l20.4,3.6M1025.1,527.2l21.8,4.3M1046.9,531.5l21.5,4.3M1068.4,535.8l20.8,4.2M1089.3,540l20.2,4M1110.3,539.8l19.5,4.1M1109.4,544l19.5,3.9M1129.8,543.8l18.5,4M1128.9,547.9l18.6,3.9M1148.3,547.9l17.4,4.1M1165.7,551.9l16.7,3.9M1182.4,555.9l15.8,3.8M710.4,456.5l37.8,23.5M742.4,464.1l36.1,22.3M773.2,471.3l34.4,21.2M802.7,478.3l32.8,20.1M831,484.9l32,18.9M859.9,490.7l31,18M888.2,496.1l29,16.9M886.6,503.2l28.7,16.1M913.9,500.9l27.5,16M912.5,507.6l27.3,15.3M938.5,505.5l26.2,15.2M937.2,511.8l26,14.5M960.9,515.9l24.7,13.7M962.2,509.8l2.6,10.8M983.4,519.8l23.3,13M984.6,514.1l2.5,10.2M1004.7,523.6l22.1,12.3M1005.9,518.2l2.2,9.6M1025.1,527.2l22,12M1026.2,522.1l2,9M1046.9,531.5l21.6,11.7M1048,526.7l0.4,8.1M1068.4,535.8l20.8,11.2M1069.4,531.2l0.3,7.7M1089.3,540l20,10.8M1090.2,535.5l0.2,7.4M1110.3,539.8l19.4,10.8M1109.4,544l19.3,10.4M1129.8,543.8l18.7,10.4M1128.9,547.9l18.6,9.9M1148.3,547.9l17.6,10M1165.7,551.9l16.8,9.6M1182.4,555.9l16,9.1M732.6,476.7l15.6,3.3M748.2,480l30.3,6.4M778.5,486.4l29.1,6.1M807.6,492.5l27.9,5.9M835.5,498.4l27.5,5.4M863,503.8l27.9,4.8M890.9,508.6l26.2,4.4M917.1,513l24.3,3.9M915.3,519.3l24.4,3.6M941.5,516.9l23.3,3.7M939.8,522.9l23.4,3.4M964.8,520.7l22.3,3.6M963.2,526.3l22.4,3.3M985.6,529.6l21.1,3.2M1006.7,532.8l20.1,3.1M1026.8,535.9l20.2,3.3M1047.1,539.2l21.4,4M1068.5,543.2l20.7,3.8M1089.2,547.1l20.1,3.7M1110.4,546.8l19.4,3.8M1109.3,550.8l19.4,3.6M1129.8,550.6l18.7,3.6M1128.7,554.4l18.8,3.5M1148.5,554.2l17.4,3.7M1147.5,557.9l17.4,3.5M1165.9,557.9l16.6,3.6M1182.5,561.5l15.9,3.5M748.2,480l30.6,23.4M778.5,486.4l29.2,22.2M807.6,492.5l27.9,21.1M835.5,498.4l26.6,20M863,503.8l26.6,18.8M890.9,508.6l25.5,18M917.1,513l23.6,16.8M915.3,519.3l23.5,16.2M941.5,516.9l22.5,15.9M939.8,522.9l22.4,15.4M964.8,520.7l21.4,15.1M963.2,526.3l21.3,14.6M964.8,520.7l-0.8,12.2M985.6,529.6l20.1,13.8M987.1,524.2l-0.9,11.5M1006.7,532.8l19.1,13.1M1008.1,527.8l-0.8,10.8M1026.8,535.9l18.1,12.3M1028.2,531.1l-0.9,10.2M1047.1,539.2l18.8,12.4M1048.4,534.7l-2,9.2M1068.5,543.2l18.1,11.9M1069.7,538.9l-2.5,8.6M1089.2,547.1l17.5,11.4M1090.4,542.9l-2.5,8.2M1110.4,546.8l16.9,11.3M1109.3,550.8l16.9,11M1110.4,546.8l-2.4,7.9M1129.8,550.6l16.3,10.8M1128.7,554.4l16.2,10.5M1148.5,554.2l15.4,10.5M1147.5,557.9l15.3,10.1M1165.9,557.9l14.6,10M1182.5,561.5l14,9.5M748.8,497.9l30.1,5.4M778.9,503.4l28.9,5.2M807.7,508.6l27.7,5M835.5,513.6l26.6,4.8M862,518.4l27.5,4.2M889.5,522.6l26.9,4M916.4,526.6l24.3,3.2M914.4,532.7l24.4,2.9M940.7,529.8l23.2,3M938.8,535.5l23.3,2.7M963.9,532.8l22.2,2.9M962.1,538.3l22.3,2.6M984.5,540.9l21.2,2.5M1005.7,543.4l20.1,2.5M1025.8,545.9l19.2,2.4M1045,548.2l20.9,3.4M1065.9,551.6l20.7,3.5M1086.6,555.1l20.1,3.4M1106.7,558.5l19.4,3.3M1127.3,558.1l18.7,3.3M1126.1,561.7l18.8,3.2M1146.1,561.4l17.8,3.3M1144.9,564.9l17.9,3.1M1163.9,564.7l16.6,3.2M1180.5,567.9l16,3.1M1196.5,571l15.1,3.0" stroke-width="2.5"/>
<path d="M1205.7,604.7l13.2,0.8M1218.3,604.8l11.8,0.8M1218.9,605.5l11.8,0.7M1230.1,605.6l10.5,0.7M1240.6,606.3l9.2,0M1079.2,596.2l-9.4,-11.3M1100.5,597.9l-9.1,-10.7M1120.7,599.3l-8.7,-10M1140.1,600.5l-8.3,-9.4M1174.7,601.8l-7.3,-8.2M1190.5,602.9l-6.8,-7.4M1205.7,604.7l7.5,-5M1205,603.9l-6.2,-6.6M1218.3,604.8l6.8,-4.3M1218.9,605.5l6.7,-4.3M1230.1,605.6l6,-3.7M1240.6,606.3l5.3,-3.4M1199.6,598.2l13.7,1.5M1213.3,599.7l12.4,1.5M1225.1,600.5l11.1,1.4M1225.6,601.2l11,1.3M1236.1,602l9.8,1M1245.9,602.9l8.5,0.6M1091.4,587.2l-8.5,-11.7M1112.1,589.3l-8.1,-11M1131.8,591.1l-7.8,-10.4M1150.6,592.9l-7.4,-9.8M1183.8,595.5l-6.5,-8.6M1199.6,598.2l8.2,-5.2M1198.8,597.3l-6,-7.8M1213.3,599.7l7.4,-4.5M1212.6,598.9l-5.5,-7M1225.1,600.5l6.6,-3.9M1225.6,601.2l6.6,-3.8M1236.1,602l5.9,-3.4M1245.9,602.9l5.1,-3M1207.8,593l12.9,2.2M1220.1,594.3l11.6,2.3M1220.7,595.3l11.5,2.2M1231.7,596.6l10.3,2M1242,598.6l9,1.3M1082.9,575.5l-7.1,-10.7M1103.9,578.3l-6.9,-10.2M1124,580.8l-6.6,-9.5M1143.1,583.1l-6.3,-9M1177.3,586.9l-5.5,-8.5M1192.9,589.5l-5.1,-7.7M1207.8,593l8.6,-3.7M1207.1,591.9l-4.8,-6.9M1220.1,594.3l7.7,-3.2M1220.7,595.3l7.6,-3M1231.7,596.6l6.7,-2.7M1242,598.6l5.9,-2.5M1203,586.6l13.3,2.8M1216.4,589.3l11.9,2.9M1227.8,591.1l10.7,2.8M1228.3,592.3l10.6,2.6M1238.4,593.9l9.4,2.2M1247.8,596.1l8.2,1.7M1097.1,568.1l-5.1,-10.1M1117.4,571.3l-4.9,-9.6M1136.8,574.2l-4.7,-9M1155.3,576.9l-4.6,-8.5M1187.7,581.9l-3.9,-8.1M1203,586.6l9.9,-3.4M1202.4,585.1l-3.6,-7.3M1216.4,589.3l8.8,-2.7M1215.8,588l-3.4,-6.5M1227.8,591.1l7.9,-2.4M1228.3,592.3l7.8,-2.3M1238.4,593.9l6.9,-2M1247.8,596.1l5.9,-1.8M463.7,462.2l19.1,-18.6M1184.5,575.9l14.8,3.8M1199.3,579.7l13.6,3.5M1212.4,581.5l12.4,3.7M1212.9,583.2l12.3,3.4M1224.7,585.1l10.9,3.6M508.3,469.5l-3.5,-21.7M551.1,476.4l-3.6,-20.6M592.2,483.1l-3.6,-19.6M631.6,489.5l-3.7,-18.6M669.7,495l-3.9,-17.4M706.5,500.3l-3.9,-16.6M1048.3,550.2l-3.6,-9.7M1070.6,554.1l-3.5,-9.3M1092,557.9l-3.4,-8.9M1112.5,561.7l-3.3,-8.5M1167.7,569.4l-2.9,-7.8M1184.5,575.9l12.2,-2.6M1183.8,573.8l-2.6,-7.5M1199.3,579.7l11.1,-2.3M1212.4,581.5l10.2,-2.1M1212.9,583.2l10.1,-2M1224.7,585.1l8.9,-1.5M895.1,520.8l15.2,6.5M895.1,520.8l-12.5,2.5M482.7,443.6l23.9,-15.4M1147.6,560.9l17.9,3.6M1165.4,564.5l16.4,4.4M1181.2,566.3l15,4.7M1181.8,568.9l14.9,4.5M1196.2,571l13.7,4.3M1210,575.4l12.6,4M702.6,483.7l0.2,-14.8M737.9,489.3l0.2,-14M771.7,494.4l0,-13.3M804,499.3l-0.2,-12.6M835,504.1l-0.3,-12M864.6,508.7l-0.5,-11.4M892.9,513.2l-0.6,-10.8M946.7,522.6l-1.1,-10.2M972.4,527.3l-1.2,-9.8M997.3,531.8l-1.3,-9.4M1021.4,536.2l-1.3,-9M1044.7,540.5l-1.4,-8.6M1108.4,549.8l-1.2,-8.1M1128.1,554l-1.2,-7.7M1147.6,560.9l16.4,-2.9M1146.9,557.9l-1.2,-7.2M1165.4,564.5l15.3,-2.4M1164.8,561.7l-1.3,-6.8M1181.2,566.3l14,-1.7M1181.8,568.9l13.8,-1.7M1196.2,571l12.7,-1.5M1210,575.4l11.5,-1.3M505.2,417.9l31.3,-10.1M506.7,428.2l42.4,9M549.1,437.2l40.7,8.6M589.8,445.8l39.1,8.3M628.9,454.1l37.5,7.9M666.3,462l36.5,6.8M1087.1,541l20.6,4.5M1107.7,545.5l19.7,4.4M1127,546.3l18.7,4.4M1127.5,549.9l18.7,4.2M1145.7,550.7l17.8,4.2M1163.5,554.8l16.8,4.3M1180.3,559.1l14.9,5.4M506.7,428.2l51.2,-5.2M549.1,437.2l48.8,-4.8M547.7,427.5l9.5,-14.5M589.8,445.8l46.5,-4.5M588.5,436.6l8.8,-13.9M628.9,454.1l44.3,-4.3M627.6,445.3l8.1,-13.2M666.3,462l42.4,-4.3M665.2,453.7l7.4,-12.5M701.7,460.9l6.6,-11.4M737,467.7l6.1,-11M770.7,473.9l5.8,-10.3M919.1,507.3l3.3,-7.8M1042.7,527.5l2,-6.8M1065.1,532.2l1.9,-6.6M1087.1,541l21.9,-1.5M1086.6,537.1l1.8,-6.4M1107.7,545.5l20.9,-1.4M1107.2,541.7l1.6,-6.1M1127,546.3l20,-1.2M1127.5,549.9l19.7,-1.2M1145.7,550.7l19,-1.1M1163.5,554.8l17.9,-1M1180.3,559.1l16.1,0M536.5,407.8l20.7,5.1M557.2,412.9l40.1,9.8M597.3,422.7l38.5,9.4M635.7,432.1l36.9,9M672.6,441.2l35.7,8.3M708.3,449.5l34.9,7.2M743.1,456.7l33.4,6.9M743.6,464.6l33.3,6.5M776.5,463.6l31.7,6.5M777,471.1l31.7,6.1M808.7,477.2l30.4,5.9M839,483l29.1,5.6M868.1,488.6l27.7,5.5M895.9,494.2l26.5,5.3M973.5,510.1l24.6,5.2M998.1,515.3l23.8,5M1022,520.3l23.1,4.9M1045,525.2l22.3,4.7M1067.1,525.6l21.3,5.1M1067.3,529.9l21.3,4.9M1088.3,530.7l20.4,4.9M1108.8,535.6l19.6,4.8M1128.4,540.4l18.6,4.7M557.2,412.9l56.5,1.8M597.3,422.7l53.8,1.8M635.7,432.1l51.2,1.7M672.6,441.2l48.7,1.7M708.3,449.5l47,1.1M743.1,456.7l45.1,1.1M743.6,464.6l44.6,0.7M776.5,463.6l42.7,1M777,471.1l42.2,0.6M808.7,477.2l40.2,0.6M839,483l38.2,0.6M838.6,476.3l10.2,-5.3M868.1,488.6l36.2,0.6M867.8,482.3l9.5,-5M895.9,494.2l34.3,0.7M895.5,488.2l8.9,-4.9M922,493.8l8.2,-4.6M947.7,499.4l7.2,-4.6M973.5,510.1l30.5,0.9M973.2,505l6.6,-4.5M998.1,515.3l29.4,0.9M997.8,510.4l6.2,-4.3M1022,520.3l28.2,0.9M1021.7,515.6l5.8,-4.1M1045,525.2l27.2,0.8M1067.1,525.6l26.3,1.2M1067.3,529.9l26,1M1088.3,530.7l25,1.2M1108.8,535.6l23.9,1.2M1128.4,540.4l22.7,1.2M574.7,404.5l39,10.2M613.7,414.7l37.4,9.8M651.1,424.5l35.9,9.4M686.9,433.9l34.4,9M721.3,442.9l34,7.7M755.3,450.6l32.9,7.2M788.2,457.8l31,6.8M788.2,465.2l31,6.4M819.2,464.6l29.6,6.5M819.2,471.6l29.6,6.1M848.8,477.7l28.4,5.9M877.2,483.6l27.1,5.7M904.4,489.3l25.8,5.5M930.2,494.8l24.7,5.3M954.9,500.1l24.9,5.5M979.7,505.6l24.3,5.4M1004,511l23.5,5.2M1027.5,516.2l22.7,5M1050.2,521.2l22,4.9M1072.2,521.7l21.1,5M1072.2,526l21.1,4.8M1093.3,526.8l20.1,5.1M1113.4,531.9l19.3,4.9M1132.7,536.8l18.4,4.8M574.7,404.5l57.9,9M613.7,414.7l55.1,8.6M651.1,424.5l52.5,8.2M686.9,433.9l49.9,7.8M721.3,442.9l48,7.1M755.3,450.6l46.2,6.6M788.2,457.8l43.8,6.3M788.2,465.2l43.2,6.3M819.2,464.6l41.6,6M819.2,471.6l41.1,6M848.8,477.7l39.1,5.7M877.2,483.6l37.1,5.4M877.2,477.3l11.2,-0.5M904.4,489.3l35.1,5.2M904.4,483.3l10.5,-0.6M930.2,494.8l33.3,5M930.2,489.2l9.7,-0.6M954.9,500.1l32.2,4.9M954.9,494.8l9,-0.6M979.7,505.6l31.2,4.8M979.7,500.5l7.7,-0.8M1004,511l30,4.6M1004,506.1l7.3,-0.8M1027.5,516.2l28.9,4.5M1027.5,511.5l6.9,-0.8M1050.2,521.2l27.8,4.3M1072.2,521.7l27,4.1M1072.2,526l26.7,4.1M1093.3,526.8l25.6,4.1M1113.4,531.9l24.5,4M1132.7,536.8l23.3,3.8M613.9,408.4l18.7,5M632.6,413.5l36.2,9.8M668.8,423.3l34.8,9.4M703.5,432.7l33.3,9M736.9,441.7l32.4,8.3M769.3,449.9l32.1,7.2M801.5,457.2l30.5,6.9M832,464l28.8,6.5M831.4,471.5l28.8,6.1M860.8,470.5l27.6,6.2M860.3,477.6l27.6,5.8M887.9,483.4l26.5,5.6M914.4,489l25.1,5.5M939.5,494.5l24,5.3M963.5,499.8l23.5,5.2M987,505l23.9,5.4M1010.9,510.4l23.1,5.2M1034,515.6l22.4,5M1056.3,520.6l21.6,4.9M1078.3,521l20.9,4.9M1078,525.5l20.9,4.7M1099.2,525.8l19.8,5.1M1098.9,530.2l19.8,4.9M1118.9,530.9l18.9,4.9M1137.9,535.8l18.1,4.8M632.6,413.5l52.3,18M668.8,423.3l49.8,17.1M703.5,432.7l47.4,16.3M736.9,441.7l45.1,15.5M769.3,449.9l43.9,14.2M801.5,457.2l42.1,13.6M832,464l39.6,12.9M831.4,471.5l39.2,12.6M860.8,470.5l37.7,12.2M860.3,477.6l37.3,11.9M887.9,483.4l35.5,11.3M888.4,476.7l10.1,6M914.4,489l33.6,10.8M914.9,482.7l9.4,5.7M939.5,494.5l31.8,10.3M939.9,488.5l8.8,5.2M963.5,499.8l30.1,9.7M963.9,494.2l8.2,4.9M987,505l29.8,9.6M987.4,499.7l6.9,4.4M1010.9,510.4l28.7,9.2M1011.3,505.2l6.2,4.1M1034,515.6l27.6,8.8M1034.4,510.7l5.9,3.9M1056.3,520.6l26.5,8.5M1056.7,515.9l5.5,3.8M1078.3,521l25.8,8.3M1078,525.5l25.5,8.1M1099.2,525.8l24.6,8.1M1098.9,530.2l24.3,7.9M1118.9,530.9l23.4,7.8M1137.9,535.8l22.3,7.4M924.2,488.3l24.5,5.4M948.8,493.8l23.3,5.3M972.1,499l22.3,5M994.3,504.1l23.1,5.3M1017.5,509.4l22.7,5.2M1040.2,514.6l22,5M1062.2,519.6l21.3,4.9M924.2,488.3l32.1,12.5M948.8,493.8l30.4,12M972.1,499l28.8,11.3M994.3,504.1l28.1,10.9M1017.5,509.4l27.4,10.6M1040.2,514.6l26.4,10.2M1062.2,519.6l25.4,9.8M956.4,500.9l22.8,4.8M979.1,505.7l21.7,4.6M1000.8,510.3l21.6,4.7M1022.4,515l22.4,5M1044.9,520l21.7,4.8M1066.6,524.8l21,4.6M956.4,500.9l28.2,13.2M979.1,505.7l26.8,12.5M1000.8,510.3l25.4,11.8M1022.4,515l25.5,11.6M1044.9,520l24.6,11.2M1066.6,524.8l23.7,10.8M962.2,509.8l22.5,4.2M984.6,514.1l21.3,4.1M1005.9,518.2l20.3,3.9M1026.2,522.1l21.8,4.5M1048,526.7l21.5,4.5M1069.4,531.2l20.8,4.4M1090.2,535.5l20.1,4.2M962.2,509.8l25,14.4M984.6,514.1l23.5,13.7M1005.9,518.2l22.3,12.9M1026.2,522.1l22.2,12.6M1048,526.7l21.8,12.2M1069.4,531.2l21,11.7M1090.2,535.5l20.2,11.3M987.1,524.2l21,3.5M1008.1,527.8l20.1,3.4M1028.2,531.1l20.2,3.6M1048.4,534.7l21.4,4.2M1069.7,538.9l20.7,4M1090.4,542.9l20,3.9M987.1,524.2l20.2,14.3M1008.1,527.8l19.2,13.5M1028.2,531.1l18.2,12.8M1048.4,534.7l18.9,12.8M1069.7,538.9l18.2,12.3M1090.4,542.9l17.6,11.8M986.2,535.7l21.1,2.8M1007.3,538.6l20,2.7M1027.3,541.3l19.1,2.6M1046.4,543.9l20.9,3.6M1067.3,547.5l20.7,3.7M1088,551.1l20,3.5M1108,554.7l19.4,3.4" stroke-width="3.0"/>
<path d="M428.9,566.6l4,-27.7M1158.5,601.7l17.1,1.1M1175.6,602.8l15.7,1M1190.5,602.9l14.5,1M1191.3,603.8l14.4,0.9M1205,603.9l13.2,0.9M475.3,568.6l-19,-27.9M519.8,570.4l-18.3,-26.5M562.5,572.2l-17.6,-25.2M603.5,573.9l-16.9,-23.9M642.9,575.6l-16.3,-22.7M680.9,577.2l-15.8,-21.7M717.4,577.8l-15.2,-20.1M1010.3,590.6l-10.5,-13M1034.2,592.5l-10.2,-12.5M1057.2,594.4l-9.8,-11.9M1139,599.3l-8.3,-9.5M1158.5,601.7l9.8,-7M1157.5,600.6l-7.9,-9M1175.6,602.8l9,-6.2M1190.5,602.9l8.3,-5.6M1191.3,603.8l8.2,-5.6M1205,603.9l7.6,-5M432.9,538.9l6,-28.9M1168.3,594.8l16.3,1.8M1184.6,596.6l15,1.7M1198.8,597.3l13.8,1.6M1212.6,598.9l12.4,1.6M456.3,540.6l-17.3,-30.6M501.5,543.9l-16.7,-29.1M544.9,547.1l-16.1,-27.6M586.6,550.1l-15.5,-26.2M626.5,552.9l-15,-24.7M665.1,555.5l-14.5,-23.6M702.2,557.6l-14,-22.1M999.8,577.6l-9.8,-14.1M1024,580.1l-9.5,-13.5M1047.4,582.5l-9.1,-12.9M1069.8,584.9l-8.8,-12.3M1149.6,591.6l-7.5,-10.1M1168.3,594.8l9.9,-6.5M1167.4,593.6l-7,-9.6M1184.6,596.6l9,-5.8M1198.8,597.3l8.3,-5.3M1212.6,598.9l7.5,-4.6M438.9,510l9.9,-24.6M1161.3,585.5l16.8,2.7M1178.2,588.2l15.5,2.5M1192.9,589.5l14.3,2.4M1193.6,590.8l14.2,2.3M1207.1,591.9l13,2.4M484.8,514.9l-13.1,-26.4M528.8,519.5l-12.7,-25.1M571.1,523.9l-12.2,-23.8M611.6,528.2l-11.8,-22.6M650.6,531.9l-11.5,-21.3M688.2,535.5l-11.2,-20.3M724.4,538.2l-10.8,-19M1014.5,566.5l-7.9,-12.2M1038.2,569.6l-7.6,-11.8M1061,572.6l-7.4,-11.2M1142.1,581.5l-6.3,-9.5M1161.3,585.5l11.3,-5.3M1160.4,584l-6,-9.1M1178.2,588.2l10.3,-4.7M1192.9,589.5l9.5,-4.5M1193.6,590.8l9.4,-4.2M1207.1,591.9l8.6,-4M448.8,485.4l14.9,-23.2M1172.6,580.2l15.9,3.3M1188.5,583.5l14.6,3M1202.4,585.1l13.4,2.9M1215.8,588l12,3.1M471.7,488.5l-8,-26.3M516.2,494.4l-7.9,-25M558.8,500.1l-7.7,-23.7M599.7,505.6l-7.5,-22.5M639,510.7l-7.4,-21.2M677,515.2l-7.3,-20.1M713.6,519.2l-7.1,-19M1006.7,554.3l-5.7,-12.1M1030.6,557.8l-5.5,-11.6M1053.6,561.4l-5.4,-11.2M1075.8,564.8l-5.2,-10.6M1154.4,574.9l-4.5,-9M1172.6,580.2l11.9,-4.3M1171.8,578.4l-4.1,-8.9M1188.5,583.5l10.9,-3.8M1202.4,585.1l10,-3.6M1215.8,588l8.9,-2.9M1132.1,565.1l18.7,3.3M1150.8,568.4l17.7,3.4M1168.4,571.8l16.1,4.1M1183.8,573.8l14.9,4M1198.7,577.8l13.6,3.7M741.7,504.8l-3.7,-15.6M775.4,509.2l-3.7,-14.8M807.7,513.4l-3.7,-14M838.7,517.4l-3.7,-13.4M868.3,521.4l-3.7,-12.6M923.9,529.5l-3.8,-11.8M950.4,533.9l-3.8,-11.3M976.1,538.2l-3.7,-10.9M1001,542.3l-3.7,-10.5M1025.1,546.2l-3.7,-10M1111.6,558.8l-3.2,-9M1132.1,565.1l15.5,-4.2M1131.2,562.4l-3.1,-8.5M1150.8,568.4l14.7,-4M1149.9,565.9l-3,-8M1168.4,571.8l13.4,-3M1183.8,573.8l12.4,-2.8M1198.7,577.8l11.2,-2.4M480.6,434.1l24.6,-16.2M482.7,443.6l22,4.1M504.8,447.7l42.8,8M547.5,455.8l41,7.7M588.6,463.5l39.4,7.4M1088.5,549.1l20.6,4.1M1109.2,553.2l19.7,4M1128.1,554l18.8,3.9M1128.9,557.2l18.7,3.7M1146.9,557.9l17.9,3.8M1164.8,561.7l16.5,4.6M504.8,447.7l44.3,-10.6M502.7,438.5l2.5,-20.5M547.5,455.8l42.3,-10M545.5,447l2.2,-19.6M588.6,463.5l40.3,-9.4M586.7,455.2l1.8,-18.6M626.1,463l1.5,-17.7M664.1,470.2l1.1,-16.5M701,476.5l0.7,-15.6M736.4,482.4l0.7,-14.8M920.1,517.7l-1,-10.5M1043.8,536.5l-1.1,-9.1M1066.2,541.1l-1.1,-8.8M1088.5,549.1l19.2,-3.6M1087.7,545.5l-1.1,-8.4M1109.2,553.2l18.3,-3.3M1128.1,554l17.6,-3.3M1128.9,557.2l17.3,-3.1M1146.9,557.9l16.6,-3.1M1164.8,561.7l15.6,-2.5M505.2,417.9l42.5,9.5M547.7,427.5l40.8,9.1M588.5,436.6l39.1,8.8M627.6,445.3l37.5,8.4M665.2,453.7l36.5,7.2M701.7,460.9l35.3,6.8M702.8,468.8l35.3,6.4M737,467.7l33.6,6.3M738.1,475.2l33.6,5.9M771.7,481.1l32.2,5.6M803.8,486.7l30.8,5.4M834.7,492.1l29.5,5.2M864.1,497.3l28.1,5.1M971.2,517.5l24.8,4.9M996,522.4l24,4.8M1020.1,527.2l23.3,4.6M1043.3,531.8l22.4,4.6M1065.1,532.2l21.5,4.8M1065.7,536.4l21.4,4.6M1086.6,537.1l20.6,4.7M1107.2,541.7l19.7,4.6M505.2,417.9l52,-5M547.7,427.5l49.6,-4.7M588.5,436.6l47.2,-4.4M627.6,445.3l45,-4.1M665.2,453.7l43.1,-4.3M701.7,460.9l41.4,-4.2M702.8,468.8l40.8,-4.3M737,467.7l39.5,-4.1M738.1,475.2l38.8,-4.2M771.7,481.1l37,-3.9M803.8,486.7l35.2,-3.7M802.9,479.9l5.3,-9.8M834.7,492.1l33.5,-3.5M833.7,485.7l4.9,-9.3M864.1,497.3l31.7,-3.1M863.3,491.3l4.5,-8.9M891.4,496.7l4.1,-8.5M918.3,501.9l3.7,-8M944.8,507.3l2.9,-7.9M971.2,517.5l26.9,-2.2M970.5,512.6l2.7,-7.6M996,522.4l25.9,-2.1M995.3,517.7l2.5,-7.3M1020.1,527.2l25,-2M1019.4,522.7l2.2,-7M1043.3,531.8l24,-1.9M1065.1,532.2l23.2,-1.6M1065.7,536.4l22.9,-1.6M1086.6,537.1l22.2,-1.4M1107.2,541.7l21.2,-1.3M808.2,470.1l30.4,6.2M838.6,476.3l29.1,6M867.8,482.3l27.7,5.9M895.5,488.2l26.5,5.6M922,493.8l25.7,5.5M922.4,499.5l25.7,5.2M947.7,499.4l25.5,5.6M948,504.7l25.5,5.4M973.2,505l24.7,5.4M997.8,510.4l23.9,5.2M1021.7,515.6l23.1,5.1M1044.7,520.7l22.3,4.9M808.2,470.1l40.6,0.9M838.6,476.3l38.6,0.9M867.8,482.3l36.6,1M895.5,488.2l34.7,1M922,493.8l32.9,1M922.4,499.5l32.5,0.6M947.7,499.4l32,1.1M948,504.7l31.7,0.9M973.2,505l30.8,1.1M997.8,510.4l29.7,1.1M1021.7,515.6l28.6,1.1M1044.7,520.7l27.5,1.1M848.8,471.1l28.4,6.2M877.2,477.3l27.1,6M904.4,483.3l25.8,5.9M930.2,489.2l24.7,5.6M954.9,494.8l24.9,5.7M979.7,500.5l24.3,5.6M1004,506.1l23.5,5.4M1027.5,511.5l22.7,5.2M1050.2,516.7l22,5.1M848.8,471.1l39.6,5.7M877.2,477.3l37.6,5.4M904.4,483.3l35.6,5.2M930.2,489.2l33.7,5M954.9,494.8l32.5,4.9M979.7,500.5l31.5,4.8M1004,506.1l30.4,4.6M1027.5,511.5l29.2,4.4M1050.2,516.7l28.1,4.3M888.4,476.7l26.4,5.9M914.9,482.7l25.1,5.9M939.9,488.5l24,5.6M963.9,494.2l23.5,5.5M987.4,499.7l23.9,5.6M1011.3,505.2l23.1,5.4M1034.4,510.7l22.3,5.2M1056.7,515.9l21.6,5.1M888.4,476.7l35.8,11.6M914.9,482.7l33.9,11.1M939.9,488.5l32.1,10.5M963.9,494.2l30.4,9.9M987.4,499.7l30.1,9.7M1011.3,505.2l28.9,9.4M1034.4,510.7l27.8,9M1056.7,515.9l26.8,8.6" stroke-width="3.5"/>
<path d="M1120.7,599.3l19.3,1.3M1140.1,600.5l18.4,1.2M1157.5,600.6l17.2,1.2M1174.7,601.8l15.8,1.1M752.4,578.3l-14.6,-19.1M786,578.7l-14,-18.1M818.1,579.2l-13.4,-17.1M848.9,579.6l-12.9,-16.1M878.2,580l-12.3,-15.2M906.4,582l-11.9,-15.4M933.7,584.3l-11.5,-14.8M960.1,586.5l-11.2,-14.2M985.6,588.5l-10.8,-13.6M1078,594.7l-9.4,-11.5M1099.3,596.5l-9.1,-10.9M1120.7,599.3l11.1,-8.1M1119.6,598l-8.7,-10.1M1140.1,600.5l10.5,-7.6M1157.5,600.6l9.9,-7M1174.7,601.8l9.1,-6.3M1112.1,589.3l19.7,1.8M1131.8,591.1l18.8,1.8M1150.6,592.9l17.7,1.9M1167.4,593.6l16.4,1.9M1183.8,595.5l15.1,1.8M737.8,559.2l-13.5,-20.9M772,560.7l-12.9,-19.8M804.7,562.1l-12.4,-18.8M836,563.5l-11.9,-17.8M865.9,564.8l-11.4,-16.8M894.5,566.7l-11,-16.4M922.1,569.5l-10.7,-16M948.9,572.3l-10.4,-15.3M974.8,575l-10.1,-14.7M1090.2,585.7l-8.5,-12.1M1112.1,589.3l11.9,-8.5M1110.9,587.8l-8.1,-11.4M1131.8,591.1l11.4,-8M1130.7,589.8l-7.8,-10.7M1150.6,592.9l10.8,-7.4M1167.4,593.6l9.9,-6.7M1183.8,595.5l9.1,-6M1124,580.8l19.1,2.4M1143.1,583.1l18.2,2.4M1160.4,584l16.9,2.9M1177.3,586.9l15.6,2.6M759,540.8l-10.4,-18M792.3,543.3l-10.1,-17.1M824.1,545.7l-9.7,-16.2M854.4,548.1l-9.4,-15.3M883.5,550.3l-9,-14.4M911.4,553.6l-8.8,-14.4M938.5,557l-8.6,-13.8M964.7,560.3l-8.3,-13.3M990,563.5l-8.1,-12.7M1081.7,573.5l-7.1,-11.3M1102.8,576.4l-6.8,-10.8M1124,580.8l12.8,-6.6M1122.9,579l-6.5,-10.1M1143.1,583.1l12.2,-6.2M1160.4,584l11.4,-5.6M1177.3,586.9l10.4,-5M1117.4,571.3l19.4,2.9M1136.8,574.2l18.5,2.8M1155.3,576.9l17.3,3.3M1171.8,578.4l15.9,3.5M1187.7,581.9l14.6,3.2M748.6,522.8l-6.9,-18M782.2,526.2l-6.8,-17M814.3,529.5l-6.6,-16.1M845.1,532.8l-6.4,-15.3M874.5,535.8l-6.2,-14.5M902.6,539.2l-6.1,-14.1M929.9,543.2l-6.1,-13.6M956.4,547l-5.9,-13.1M981.9,550.7l-5.8,-12.6M1096,565.6l-5,-10.7M1117.4,571.3l14.7,-6.1M1116.4,568.9l-4.8,-10.1M1136.8,574.2l13.9,-5.7M1135.8,572l-4.6,-9.6M1155.3,576.9l13.1,-5.1M1171.8,578.4l12.1,-4.6M1187.7,581.9l11,-4M461,453.9l19.6,-19.8M463.7,462.2l44.6,7.3M508.3,469.5l42.8,7M1092,557.9l20.5,3.7M1112.5,561.7l19.6,3.5M1131.2,562.4l18.7,3.5M1149.9,565.9l17.7,3.5M1167.7,569.4l16.2,4.4M463.7,462.2l41.1,-14.5M508.3,469.5l39.3,-13.7M505.7,461.6l-3.1,-23.1M548.7,469l-3.1,-21.9M589.9,476l-3.2,-20.9M629.4,482.8l-3.3,-19.8M667.6,488.6l-3.5,-18.5M704.5,494.2l-3.5,-17.7M896.5,525.1l-3.6,-11.9M1047.2,546.8l-3.4,-10.3M1069.5,550.9l-3.3,-9.9M1092,557.9l17.2,-4.8M1091,554.9l-3.3,-9.4M1112.5,561.7l16.3,-4.5M1131.2,562.4l15.7,-4.5M1149.9,565.9l14.9,-4.2M1167.7,569.4l13.6,-3.2M480.6,434.1l22.1,4.4M502.7,438.5l42.9,8.5M545.5,447l41.1,8.2M586.7,455.2l39.5,7.8M626.1,463l38,7.2M627.9,470.9l37.9,6.8M665.8,477.7l36.8,6M702.6,483.7l35.3,5.6M737.9,489.3l33.7,5.2M771.7,494.4l32.3,4.9M804,499.3l31,4.7M997.3,531.8l24.1,4.4M1021.4,536.2l23.3,4.3M1044.7,540.5l22.4,4.4M1066.2,541.1l21.5,4.4M1067.1,544.8l21.5,4.2M1087.7,545.5l20.7,4.3M1108.4,549.8l19.7,4.2M502.7,438.5l45,-11M545.5,447l43,-10.4M586.7,455.2l41,-9.8M626.1,463l39,-9.3M627.9,470.9l38.4,-8.9M665.8,477.7l37,-8.9M702.6,483.7l35.5,-8.4M737.9,489.3l33.8,-8.1M771.7,494.4l32.2,-7.7M770.2,488l0.5,-14M804,499.3l30.6,-7.2M802.6,493.2l0.3,-13.3M833.7,498.3l0.1,-12.6M863.3,503.3l-0.1,-12M891.7,508.1l-0.3,-11.4M945.6,517.9l-0.8,-10.6M971.4,522.8l-0.9,-10.2M997.3,531.8l22.8,-4.6M996.3,527.5l-1,-9.8M1021.4,536.2l21.9,-4.4M1020.5,532.1l-1,-9.4M1044.7,540.5l21,-4.1M1066.2,541.1l20.4,-4M1067.1,544.8l20.1,-3.8M1087.7,545.5l19.5,-3.8M1108.4,549.8l18.5,-3.5M770.7,473.9l32.2,6M802.9,479.9l30.9,5.7M833.7,485.7l29.5,5.6M863.3,491.3l28.2,5.4M892.2,502.4l26.9,4.9M919.1,507.3l26.4,5.2M945.5,512.4l25.7,5.1M970.5,512.6l24.9,5.1M995.3,517.7l24.1,5M1019.4,522.7l23.3,4.8M1042.7,527.5l22.4,4.8M770.7,473.9l37.6,-3.8M802.9,479.9l35.7,-3.6M833.7,485.7l34,-3.4M863.3,491.3l32.2,-3.1M892.2,502.4l30.1,-2.9M919.1,507.3l28.9,-2.6M945.5,512.4l28,-2.3M970.5,512.6l27.3,-2.2M995.3,517.7l26.3,-2.1M1019.4,522.7l25.3,-2M1042.7,527.5l24.4,-1.9" stroke-width="4.0"/>
<path d="M425.5,562.6l4,-28M428.9,566.6l46.4,1.9M475.3,568.6l44.5,1.9M519.8,570.4l42.7,1.8M1057.2,594.4l22.1,1.8M1079.2,596.2l21.2,1.7M1100.5,597.9l20.3,1.3M1119.6,598l19.4,1.3M1139,599.3l18.5,1.3M428.9,566.6l27.4,-26M475.3,568.6l26.2,-24.7M472.1,564.7l-19.1,-28.3M519.8,570.4l25.1,-23.4M516.8,566.8l-18.4,-26.9M559.6,568.8l-17.7,-25.5M600.7,570.7l-17,-24.2M640.2,572.5l-16.4,-23M678.3,574.2l-15.8,-22M1032.8,590.9l-10.2,-12.6M1057.2,594.4l12.7,-9.5M1055.8,592.8l-9.8,-12M1079.2,596.2l12.2,-9M1100.5,597.9l11.6,-8.7M1119.6,598l11.1,-8.2M1139,599.3l10.6,-7.7M429.5,534.6l6.1,-29.9M432.9,538.9l23.3,1.7M456.3,540.6l45.2,3.3M501.5,543.9l43.4,3.1M1069.8,584.9l21.6,2.3M1091.4,587.2l20.7,2.1M1110.9,587.8l19.8,1.9M1130.7,589.8l18.9,1.8M1149.6,591.6l17.8,2M456.3,540.6l28.5,-25.8M453,536.4l-17.4,-31.7M501.5,543.9l27.3,-24.4M498.4,539.9l-16.7,-30.1M542,543.3l-16.1,-28.6M583.8,546.5l-15.5,-27.1M623.9,549.5l-14.9,-25.6M662.5,552.3l-14.5,-24.4M1022.6,578.3l-9.5,-14M1046,580.8l-9.1,-13.4M1069.8,584.9l13.1,-9.4M1068.6,583.3l-8.8,-12.8M1091.4,587.2l12.5,-8.9M1110.9,587.8l12,-8.8M1130.7,589.8l11.4,-8.3M1149.6,591.6l10.8,-7.6M435.6,504.7l10.1,-26.2M438.9,510l45.9,4.8M484.8,514.9l44,4.6M528.8,519.5l42.2,4.4M1061,572.6l21.9,2.9M1082.9,575.5l21,2.8M1103.9,578.3l20.1,2.5M1122.9,579l19.2,2.5M1142.1,581.5l18.3,2.5M438.9,510l32.8,-21.6M484.8,514.9l31.4,-20.4M481.6,509.8l-12.9,-28M528.8,519.5l30,-19.3M525.8,514.7l-12.5,-26.6M568.2,519.4l-12.1,-25.3M608.9,523.9l-11.7,-24M648,527.8l-11.4,-22.6M685.8,531.6l-11.1,-21.6M1036.9,567.4l-7.6,-12.4M1061,572.6l14.8,-7.8M1059.7,570.5l-7.3,-11.9M1082.9,575.5l14.1,-7.4M1103.9,578.3l13.5,-7M1122.9,579l12.9,-7M1142.1,581.5l12.3,-6.6M445.7,478.6l15.3,-24.6M448.8,485.4l22.9,3.1M471.7,488.5l44.5,5.9M516.2,494.4l42.7,5.7M1075.8,564.8l21.3,3.3M1097.1,568.1l20.4,3.2M1116.4,568.9l19.5,3.1M1135.8,572l18.6,2.9M1154.4,574.9l17.4,3.5M471.7,488.5l36.6,-19M468.7,481.8l-7.7,-27.9M516.2,494.4l34.9,-18M513.3,488.1l-7.6,-26.5M556.1,494.1l-7.5,-25.2M597.2,499.9l-7.3,-23.9M636.6,505.3l-7.2,-22.5M674.7,510l-7.1,-21.4M1029.3,555l-5.4,-12.3M1052.4,558.6l-5.2,-11.8M1075.8,564.8l16.2,-6.8M1074.6,562.2l-5.1,-11.3M1097.1,568.1l15.5,-6.4M1116.4,568.9l14.8,-6.5M1135.8,572l14.1,-6.1M1154.4,574.9l13.3,-5.5M461,453.9l44.8,7.7M551.1,476.4l41.1,6.7M592.2,483.1l39.4,6.4M631.6,489.5l38.1,5.5M669.7,495l36.8,5.2M706.5,500.3l35.2,4.6M741.7,504.8l33.7,4.4M1025.1,546.2l23.2,3.9M1048.3,550.2l22.3,4M1070.6,554.1l21.4,3.8M1091,554.9l20.6,3.9M1111.6,558.8l19.6,3.6M461,453.9l41.7,-15.4M551.1,476.4l37.5,-12.9M592.2,483.1l35.7,-12.2M631.6,489.5l34.2,-11.8M669.7,495l32.9,-11.4M706.5,500.3l31.5,-11M741.7,504.8l30,-10.4M739.8,499.1l-3.4,-16.6M773.6,503.7l-3.4,-15.8M806.1,508.2l-3.4,-14.9M837.1,512.5l-3.4,-14.2M949.1,529.9l-3.5,-12M974.9,534.3l-3.5,-11.5M999.8,538.6l-3.5,-11.1M1025.1,546.2l19.6,-5.8M1023.9,542.7l-3.5,-10.6M1048.3,550.2l18.8,-5.4M1070.6,554.1l18,-5.1M1091,554.9l17.4,-5.1M1111.6,558.8l16.5,-4.8M664.1,470.2l36.9,6.3M701,476.5l35.4,5.9M736.4,482.4l33.8,5.5M770.2,488l32.4,5.3M835,504.1l29.6,4.7M864.6,508.7l28.3,4.5M892.9,513.2l27.2,4.5M920.1,517.7l26.6,4.9M946.7,522.6l25.7,4.7M972.4,527.3l24.9,4.5M996.3,527.5l24.1,4.6M1020.5,532.1l23.3,4.4M1043.8,536.5l22.4,4.6M664.1,470.2l37.6,-9.3M701,476.5l36.1,-8.8M736.4,482.4l34.3,-8.5M770.2,488l32.7,-8M835,504.1l29.1,-6.8M864.6,508.7l27.7,-6.3M892.9,513.2l26.2,-5.9M920.1,517.7l25.4,-5.3M918.9,512.8l-0.6,-11M946.7,522.6l24.5,-5.1M972.4,527.3l23.6,-4.8M996.3,527.5l23.1,-4.9M1020.5,532.1l22.2,-4.6M1043.8,536.5l21.3,-4.3M891.4,496.7l26.9,5.2M918.3,501.9l26.4,5.4M944.8,507.3l25.7,5.3M891.4,496.7l30.6,-2.9M918.3,501.9l29.3,-2.5M944.8,507.3l28.4,-2.3" stroke-width="4.5"/>
<path d="M562.5,572.2l41,1.7M603.5,573.9l39.4,1.7M642.9,575.6l38,1.6M680.9,577.2l36.5,0.6M717.4,577.8l35,0.5M1010.3,590.6l23.9,2M1034.2,592.5l23,1.9M1078,594.7l21.3,1.8M1099.3,596.5l20.3,1.4M562.5,572.2l24,-22.1M603.5,573.9l23,-21M642.9,575.6l22.2,-20.1M680.9,577.2l21.3,-19.6M717.4,577.8l20.4,-18.6M715,574.9l-15.2,-20.4M750.2,575.6l-14.6,-19.3M783.9,576.2l-14.1,-18.3M958.5,584.6l-11.2,-14.3M984.1,586.8l-10.9,-13.7M1010.3,590.6l13.7,-10.5M1008.9,588.9l-10.5,-13.2M1034.2,592.5l13.2,-10M1078,594.7l12.2,-9.1M1099.3,596.5l11.7,-8.7M544.9,547.1l41.6,3M586.6,550.1l40,2.8M626.5,552.9l38.5,2.6M665.1,555.5l37.1,2.1M702.2,557.6l35.6,1.6M999.8,577.6l24.2,2.5M1024,580.1l23.4,2.5M1047.4,582.5l22.5,2.4M1068.6,583.3l21.6,2.4M1090.2,585.7l20.7,2.2M544.9,547.1l26.1,-23.1M586.6,550.1l25,-21.9M626.5,552.9l24,-21M665.1,555.5l23.2,-20M702.2,557.6l22.2,-19.4M699.8,554.5l-14,-22.9M735.5,556.3l-13.5,-21.7M769.8,557.9l-12.9,-20.6M802.6,559.5l-12.4,-19.5M947.3,570.3l-10.4,-15.8M973.2,573l-10.1,-15.2M999.8,577.6l14.7,-11M998.3,575.7l-9.8,-14.6M1024,580.1l14.2,-10.5M1047.4,582.5l13.6,-9.9M1068.6,583.3l13.2,-9.8M1090.2,585.7l12.6,-9.2M571.1,523.9l40.5,4.3M611.6,528.2l39,3.8M650.6,531.9l37.6,3.6M688.2,535.5l36.2,2.7M724.4,538.2l34.7,2.6M1014.5,566.5l23.7,3M1038.2,569.6l22.8,3M1081.7,573.5l21.1,2.9M1102.8,576.4l20.1,2.6M571.1,523.9l28.7,-18.3M611.6,528.2l27.5,-17.5M650.6,531.9l26.4,-16.8M688.2,535.5l25.4,-16.3M724.4,538.2l24.2,-15.4M722.1,534.5l-10.7,-20.2M756.9,537.3l-10.3,-19.2M790.2,540l-10,-18.2M963.2,557.8l-8.3,-14M988.6,561.1l-8,-13.5M1014.5,566.5l16.1,-8.7M1013.1,564.3l-7.8,-12.9M1038.2,569.6l15.4,-8.2M1081.7,573.5l14.3,-7.9M1102.8,576.4l13.6,-7.5M558.8,500.1l40.9,5.5M599.7,505.6l39.3,5.1M639,510.7l38,4.5M677,515.2l36.6,4.1M713.6,519.2l35,3.6M1006.7,554.3l23.9,3.5M1030.6,557.8l23,3.5M1053.6,561.4l22.1,3.4M1074.6,562.2l21.3,3.4M1096,565.6l20.4,3.3M558.8,500.1l33.4,-17M599.7,505.6l31.9,-16.1M639,510.7l30.6,-15.6M677,515.2l29.4,-14.9M713.6,519.2l28.1,-14.4M711.4,514.3l-6.9,-20.2M746.5,518.2l-6.7,-19.1M780.2,521.8l-6.6,-18.1M812.5,525.4l-6.4,-17.2M954.9,543.8l-5.8,-13.9M980.5,547.6l-5.7,-13.3M1006.7,554.3l18.4,-8.1M1005.3,551.4l-5.5,-12.8M1030.6,557.8l17.7,-7.6M1053.6,561.4l16.9,-7.2M1074.6,562.2l16.4,-7.3M1096,565.6l15.6,-6.8M505.7,461.6l43,7.4M548.7,469l41.2,7.1M589.9,476l39.5,6.8M629.4,482.8l38.2,5.8M667.6,488.6l36.9,5.5M704.5,494.2l35.3,4.9M739.8,499.1l33.8,4.7M775.4,509.2l32.3,4.2M807.7,513.4l30.9,4.1M838.7,517.4l29.6,3.9M868.3,521.4l28.2,3.8M923.9,529.5l26.6,4.4M950.4,533.9l25.7,4.2M976.1,538.2l24.9,4.1M1001,542.3l24.1,4M1023.9,542.7l23.3,4.1M1047.2,546.8l22.3,4.1M1069.5,550.9l21.5,4M505.7,461.6l39.8,-14.6M548.7,469l38,-13.8M589.9,476l36.2,-13M629.4,482.8l34.7,-12.6M667.6,488.6l33.4,-12.1M704.5,494.2l31.9,-11.7M739.8,499.1l30.4,-11.1M775.4,509.2l28.6,-9.9M807.7,513.4l27.3,-9.3M838.7,517.4l25.9,-8.7M868.3,521.4l24.6,-8.2M866.7,516.7l-3.4,-13.5M895.1,520.8l-3.4,-12.7M923.9,529.5l22.8,-7M922.5,525.3l-3.6,-12.5M950.4,533.9l22,-6.6M976.1,538.2l21.2,-6.3M1001,542.3l20.4,-6.1M1023.9,542.7l19.9,-6.2M1047.2,546.8l19,-5.7M1069.5,550.9l18.2,-5.4M802.6,493.2l31.1,5.1M833.7,498.3l29.7,5M863.3,503.3l28.3,4.8M891.7,508.1l27.3,4.8M918.9,512.8l26.6,5.1M945.6,517.9l25.8,4.9M971.4,522.8l25,4.7M802.6,493.2l31.1,-7.6M833.7,498.3l29.6,-7M863.3,503.3l28.1,-6.6M891.7,508.1l26.6,-6.2M918.9,512.8l25.8,-5.6M945.6,517.9l24.9,-5.3M971.4,522.8l24,-5.1M536.5,409.3l38.2,-3.3M574.7,406l39.2,3.9M613.9,409.9l37,10M650.9,419.9l35.5,9.6M686.3,429.5l34,9.2M720.4,438.7l32.6,8.8M753,447.6l32.5,7.5M785.5,455.1l31.6,7.1M817.1,462.2l29.5,6.6M846.6,468.8l28.2,6.3M874.8,475.2l27,6.1M901.8,481.2l25.8,5.9M927.5,487.1l24.5,5.7M952.1,492.9l23.4,5.5M975.5,498.4l24,5.6M999.4,504l23.5,5.5M1022.9,509.5l22.7,5.3M1045.6,514.8l22,5.1M1067.6,519.9l21.2,5M1088.8,524.9l20.4,5M1109.2,529.9l19.3,5M1128.5,534.9l18.5,4.8M1147,539.7l17.7,4.8M1164.7,544.5l16.5,4.6M1181.2,549.1l15.7,4.3M1196.9,553.4l14.6,4.5M1211.5,557.9l11.7,5.7M1223.2,563.6l10.8,5.2M1234,568.8l9.9,4.8M1243.9,573.6l8.5,4.8M1252.4,578.4l7.1,4.7M1259.4,583.1l6.2,4.2M1265.7,587.3l5.1,3.4M1270.7,590.7l4.4,3M1275.1,593.7l3.6,2.6M1278.8,596.3l3.1,2.3M1281.9,598.6l2.6,1.9M1284.5,600.5l2.2,1.6" stroke-width="5.0"/>
<path d="M425.5,562.6l46.6,2.1M472.1,564.7l44.7,2.1M516.8,566.8l42.9,2M559.6,568.8l41.1,1.9M600.7,570.7l39.5,1.8M640.2,572.5l38.1,1.8M678.3,574.2l36.7,0.7M752.4,578.3l33.6,0.5M786,578.7l32.1,0.5M818.1,579.2l30.7,0.4M933.7,584.3l26.4,2.2M960.1,586.5l25.5,2.1M985.6,588.5l24.7,2M1032.8,590.9l23,2M1055.8,592.8l22.2,1.9M425.5,562.6l27.5,-26.2M472.1,564.7l26.3,-24.8M516.8,566.8l25.2,-23.5M559.6,568.8l24.1,-22.3M600.7,570.7l23.1,-21.2M640.2,572.5l22.3,-20.2M678.3,574.2l21.4,-19.7M752.4,578.3l19.6,-17.6M786,578.7l18.7,-16.6M818.1,579.2l17.9,-15.7M816.1,576.8l-13.5,-17.3M847,577.4l-12.9,-16.4M876.4,577.9l-12.4,-15.4M904.7,580l-11.9,-15.6M933.7,584.3l15.2,-12M932,582.3l-11.6,-14.9M960.1,586.5l14.7,-11.5M985.6,588.5l14.2,-11M1032.8,590.9l13.2,-10.1M1055.8,592.8l12.7,-9.6M429.5,534.6l23.4,1.8M453,536.4l45.4,3.5M498.4,539.9l43.6,3.4M542,543.3l41.8,3.2M583.8,546.5l40.1,3M623.9,549.5l38.7,2.8M662.5,552.3l37.3,2.3M699.8,554.5l35.8,1.7M737.8,559.2l34.1,1.5M772,560.7l32.7,1.4M804.7,562.1l31.3,1.4M836,563.5l29.9,1.3M922.1,569.5l26.8,2.8M948.9,572.3l25.9,2.7M974.8,575l25,2.6M1022.6,578.3l23.4,2.6M1046,580.8l22.5,2.5M453,536.4l28.7,-26.6M498.4,539.9l27.5,-25.2M542,543.3l26.3,-23.9M583.8,546.5l25.1,-22.6M623.9,549.5l24.2,-21.7M662.5,552.3l23.3,-20.7M699.8,554.5l22.3,-20M737.8,559.2l21.2,-18.4M772,560.7l20.3,-17.4M804.7,562.1l19.4,-16.4M836,563.5l18.5,-15.5M834,561l-11.9,-18.4M864.1,562.5l-11.5,-17.4M892.7,564.5l-11,-17M922.1,569.5l16.4,-12.5M920.5,567.4l-10.7,-16.5M948.9,572.3l15.8,-12M974.8,575l15.3,-11.5M1022.6,578.3l14.3,-10.8M1046,580.8l13.7,-10.3M435.6,504.7l46,5.1M481.6,509.8l44.2,4.9M525.8,514.7l42.4,4.7M568.2,519.4l40.7,4.5M608.9,523.9l39.1,4M648,527.8l37.8,3.8M685.8,531.6l36.3,2.9M759,540.8l33.2,2.5M792.3,543.3l31.8,2.4M824.1,545.7l30.4,2.3M938.5,557l26.2,3.3M964.7,560.3l25.3,3.2M990,563.5l24.5,3.1M1036.9,567.4l22.8,3.1M1059.7,570.5l22,3M435.6,504.7l33.1,-22.9M481.6,509.8l31.7,-21.7M525.8,514.7l30.3,-20.6M568.2,519.4l28.9,-19.5M608.9,523.9l27.7,-18.6M648,527.8l26.7,-17.8M685.8,531.6l25.6,-17.3M759,540.8l23.1,-14.6M792.3,543.3l22.1,-13.8M824.1,545.7l21,-13M822.1,542.6l-9.6,-17.2M852.6,545.1l-9.3,-16.3M881.7,547.5l-8.9,-15.4M909.8,550.9l-8.7,-15.2M938.5,557l17.9,-10M936.9,554.4l-8.5,-14.6M964.7,560.3l17.2,-9.5M990,563.5l16.6,-9.1M1036.9,567.4l15.5,-8.8M1059.7,570.5l14.9,-8.3M445.7,478.6l23,3.2M468.7,481.8l44.6,6.3M513.3,488.1l42.8,6M556.1,494.1l41.1,5.8M597.2,499.9l39.4,5.3M636.6,505.3l38.1,4.8M674.7,510l36.7,4.3M711.4,514.3l35.1,3.8M748.6,522.8l33.6,3.4M782.2,526.2l32.2,3.3M814.3,529.5l30.8,3.2M845.1,532.8l29.4,3.1M929.9,543.2l26.4,3.8M956.4,547l25.6,3.7M981.9,550.7l24.7,3.6M1029.3,555l23.1,3.7M1052.4,558.6l22.2,3.6M468.7,481.8l37,-20.2M513.3,488.1l35.4,-19.1M556.1,494.1l33.8,-18.1M597.2,499.9l32.2,-17.1M636.6,505.3l31,-16.6M674.7,510l29.8,-15.8M711.4,514.3l28.4,-15.3M748.6,522.8l26.8,-13.6M782.2,526.2l25.6,-12.9M814.3,529.5l24.4,-12.1M845.1,532.8l23.2,-11.4M843.3,528.8l-6.2,-16.3M872.8,532.1l-6.1,-15.4M901,535.7l-6,-14.9M929.9,543.2l20.5,-9.3M928.4,539.8l-5.9,-14.4M956.4,547l19.8,-8.9M981.9,550.7l19.1,-8.5M1029.3,555l17.9,-8.2M1052.4,558.6l17.1,-7.7M773.6,503.7l32.4,4.5M806.1,508.2l31,4.3M837.1,512.5l29.7,4.2M896.5,525.1l27.4,4.4M949.1,529.9l25.8,4.4M974.9,534.3l24.9,4.3M999.8,538.6l24.1,4.1M773.6,503.7l29,-10.5M806.1,508.2l27.6,-9.9M837.1,512.5l26.3,-9.2M896.5,525.1l23.6,-7.4M949.1,529.9l22.2,-7.1M974.9,534.3l21.4,-6.8M999.8,538.6l20.7,-6.5" stroke-width="5.5"/>
<path d="M715,574.9l35.2,0.6M750.2,575.6l33.7,0.6M783.9,576.2l32.3,0.6M848.9,579.6l29.3,0.4M878.2,580l28.2,2M906.4,582l27.3,2.2M958.5,584.6l25.6,2.2M984.1,586.8l24.8,2.1M1008.9,588.9l23.9,2M715,574.9l20.5,-18.7M750.2,575.6l19.6,-17.7M783.9,576.2l18.8,-16.7M848.9,579.6l17,-14.8M878.2,580l16.3,-13.4M906.4,582l15.7,-12.5M958.5,584.6l14.7,-11.6M984.1,586.8l14.2,-11.1M1008.9,588.9l13.8,-10.6M735.5,556.3l34.3,1.6M769.8,557.9l32.8,1.6M865.9,564.8l28.6,1.8M894.5,566.7l27.6,2.9M947.3,570.3l26,2.8M973.2,573l25.1,2.7M998.3,575.7l24.3,2.6M735.5,556.3l21.3,-18.9M769.8,557.9l20.4,-17.9M865.9,564.8l17.6,-14.6M894.5,566.7l16.9,-13.1M947.3,570.3l15.9,-12.4M973.2,573l15.3,-11.9M998.3,575.7l14.8,-11.4M722.1,534.5l34.8,2.8M756.9,537.3l33.3,2.7M790.2,540l31.9,2.6M854.4,548.1l29,2.2M883.5,550.3l27.9,3.3M911.4,553.6l27.1,3.4M963.2,557.8l25.4,3.3M988.6,561.1l24.6,3.2M1013.1,564.3l23.7,3.1M722.1,534.5l24.4,-16.4M756.9,537.3l23.3,-15.5M790.2,540l22.3,-14.6M854.4,548.1l20,-12.2M883.5,550.3l19.2,-11.1M911.4,553.6l18.5,-10.4M963.2,557.8l17.4,-10.2M988.6,561.1l16.8,-9.7M1013.1,564.3l16.2,-9.3M746.5,518.2l33.7,3.7M780.2,521.8l32.3,3.5M874.5,535.8l28.2,3.3M902.6,539.2l27.3,4M954.9,543.8l25.6,3.9M980.5,547.6l24.8,3.7M1005.3,551.4l24,3.6M746.5,518.2l27.1,-14.4M780.2,521.8l25.9,-13.6M874.5,535.8l22,-10.7M902.6,539.2l21.3,-9.7M954.9,543.8l20,-9.5M980.5,547.6l19.3,-9M1005.3,551.4l18.6,-8.6M866.7,516.7l28.3,4M895.1,520.8l27.4,4.6M922.5,525.3l26.6,4.6M866.7,516.7l24.9,-8.7M895.1,520.8l23.9,-7.9M922.5,525.3l23.1,-7.5" stroke-width="6.0"/>
<path d="M816.1,576.8l30.8,0.6M847,577.4l29.5,0.5M876.4,577.9l28.3,2.1M904.7,580l27.3,2.3M932,582.3l26.5,2.2M816.1,576.8l17.9,-15.8M847,577.4l17.1,-14.9M876.4,577.9l16.3,-13.5M904.7,580l15.8,-12.6M932,582.3l15.2,-12.1M802.6,559.5l31.4,1.5M834,561l30,1.5M864.1,562.5l28.7,2M892.7,564.5l27.7,2.9M920.5,567.4l26.8,2.9M802.6,559.5l19.5,-16.9M834,561l18.6,-15.9M864.1,562.5l17.7,-15M892.7,564.5l17,-13.6M920.5,567.4l16.4,-13M822.1,542.6l30.5,2.5M852.6,545.1l29.1,2.4M881.7,547.5l28,3.4M909.8,550.9l27.1,3.5M936.9,554.4l26.3,3.4M822.1,542.6l21.2,-13.8M852.6,545.1l20.2,-13M881.7,547.5l19.3,-11.8M909.8,550.9l18.7,-11.1M936.9,554.4l18,-10.6M812.5,525.4l30.9,3.5M843.3,528.8l29.5,3.3M872.8,532.1l28.2,3.5M901,535.7l27.4,4.1M928.4,539.8l26.5,4M812.5,525.4l24.6,-12.8M843.3,528.8l23.4,-12.1M872.8,532.1l22.3,-11.4M901,535.7l21.5,-10.3M928.4,539.8l20.7,-9.9" stroke-width="6.5"/></g>
</svg>
<div style="position:absolute;left:0;top:980px;width:1920px;height:1px;background:#b6b6b8;z-index:3"></div><div id="status"><div style="position:absolute;left:80px;top:6px;width:1px;height:5px;background:#d9d9de"></div><div style="position:absolute;left:1646px;top:5px;width:1px;height:6px;background:#e2e2e6"></div><div style="position:absolute;left:1669px;top:5px;width:248px;height:8px;border:1px solid #a6a6aa;border-bottom:none;border-radius:3px 3px 0 0;background:#f6f6fa;box-sizing:border-box"></div></div>
</body></html>
